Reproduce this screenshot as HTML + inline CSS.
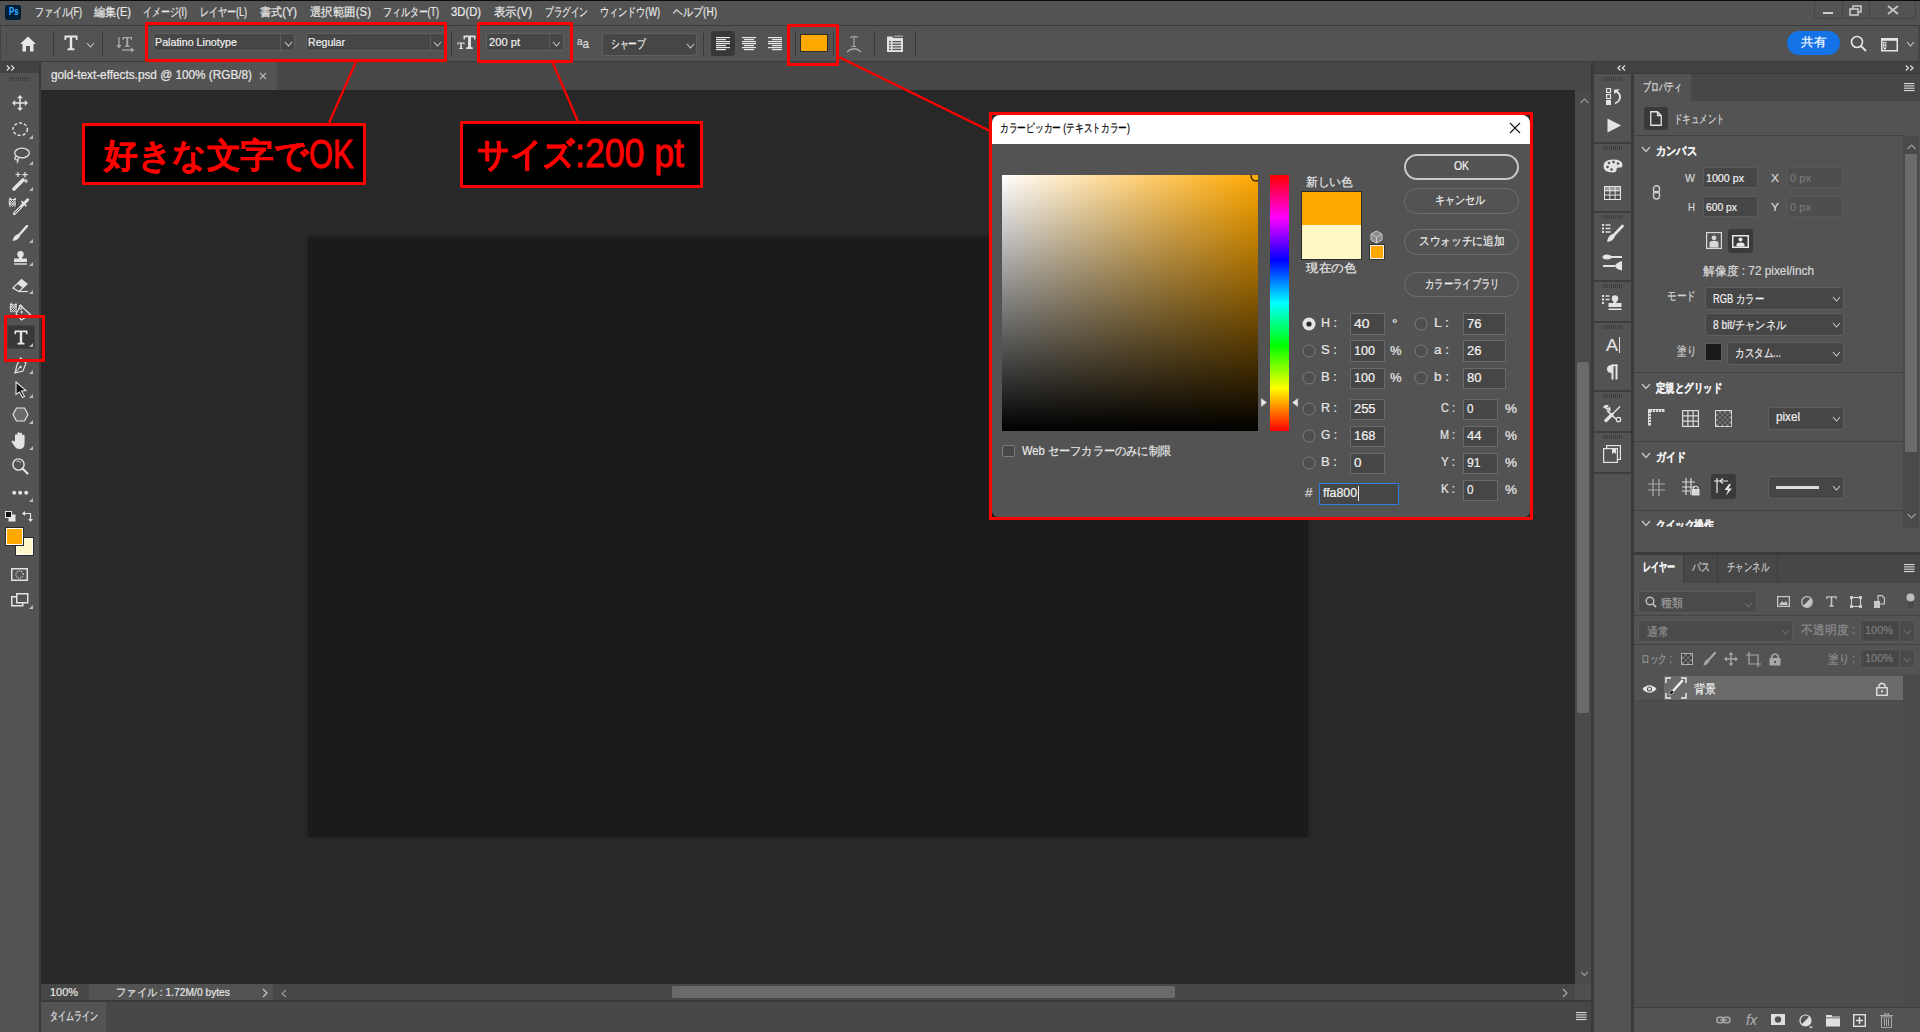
<!DOCTYPE html>
<html><head><meta charset="utf-8"><style>*{margin:0;padding:0;box-sizing:border-box}
html,body{width:1920px;height:1032px;overflow:hidden;background:#282828;font-family:"Liberation Sans",sans-serif;font-size:12px;color:#e6e6e6}
.a{position:absolute}
.t{white-space:pre;transform-origin:0 50%;-webkit-text-stroke:0.2px currentColor}
</style></head><body>
<div class="a" style="left:0px;top:0px;width:1920px;height:1px;background:#0b0b0b;"></div>
<div class="a" style="left:0px;top:1px;width:1920px;height:24px;background:#535353;"></div>
<div class="a" style="left:0px;top:25px;width:1920px;height:1px;background:#3a3a3a;"></div>
<div class="a" style="left:0px;top:26px;width:1920px;height:35px;background:#535353;"></div>
<div class="a" style="left:0px;top:61px;width:1920px;height:1px;background:#3a3a3a;"></div>
<div class="a" style="left:0px;top:62px;width:39px;height:970px;background:#535353;"></div>
<div class="a" style="left:0px;top:62px;width:39px;height:11px;background:#424242;"></div>
<div class="a" style="left:39px;top:62px;width:2px;height:970px;background:#3a3a3a;"></div>
<div class="a" style="left:41px;top:62px;width:1550px;height:28px;background:#474747;"></div>
<div class="a" style="left:41px;top:62px;width:236px;height:28px;background:#535353;"></div>
<div class="a" style="left:41px;top:90px;width:1534px;height:894px;background:#282828;"></div>
<div class="a" style="left:308px;top:237px;width:1000px;height:600px;background:#1b1b1b;box-shadow:0 0 3px rgba(0,0,0,.35)"></div>
<div class="a" style="left:1575px;top:90px;width:16px;height:894px;background:#4a4a4a;"></div>
<div class="a" style="left:1577px;top:362px;width:12px;height:351px;background:#6a6a6a;border-radius:2px"></div>
<div class="a" style="left:41px;top:984px;width:1534px;height:16px;background:#474747;"></div>
<div class="a" style="left:89px;top:984px;width:184px;height:16px;background:#535353;"></div>
<div class="a" style="left:1575px;top:984px;width:16px;height:16px;background:#4f4f4f;"></div>
<div class="a" style="left:672px;top:986px;width:503px;height:12px;background:#6a6a6a;border-radius:2px"></div>
<div class="a" style="left:41px;top:1000px;width:1550px;height:2px;background:#3a3a3a;"></div>
<div class="a" style="left:41px;top:1002px;width:1550px;height:30px;background:#474747;"></div>
<div class="a" style="left:41px;top:1002px;width:65px;height:30px;background:#535353;"></div>
<div class="a" style="left:1591px;top:62px;width:3px;height:970px;background:#3a3a3a;"></div>
<div class="a" style="left:1594px;top:62px;width:326px;height:11px;background:#424242;"></div>
<div class="a" style="left:1594px;top:73px;width:326px;height:1px;background:#3a3a3a;"></div>
<div class="a" style="left:1594px;top:74px;width:37px;height:958px;background:#535353;"></div>
<div class="a" style="left:1631px;top:74px;width:3px;height:958px;background:#3a3a3a;"></div>
<div class="a" style="left:1634px;top:74px;width:286px;height:478px;background:#535353;"></div>
<div class="a" style="left:1634px;top:74px;width:286px;height:27px;background:#474747;"></div>
<div class="a" style="left:1634px;top:74px;width:57px;height:27px;background:#535353;"></div>
<div class="a" style="left:1634px;top:552px;width:286px;height:3px;background:#3a3a3a;"></div>
<div class="a" style="left:1634px;top:555px;width:286px;height:477px;background:#4d4d4d;"></div>
<div class="a" style="left:1634px;top:555px;width:286px;height:28px;background:#474747;"></div>
<div class="a" style="left:1634px;top:555px;width:49px;height:28px;background:#535353;"></div>
<div class="a t" style="transform:scaleX(0.742);left:35px;top:5.8px;font-size:12px;line-height:12px;color:#e8e8e8;font-weight:normal;">ファイル(F)</div>
<div class="a t" style="transform:scaleX(0.925);left:94px;top:5.8px;font-size:12px;line-height:12px;color:#e8e8e8;font-weight:normal;">編集(E)</div>
<div class="a t" style="transform:scaleX(0.742);left:143px;top:5.8px;font-size:12px;line-height:12px;color:#e8e8e8;font-weight:normal;">イメージ(I)</div>
<div class="a t" style="transform:scaleX(0.750);left:200px;top:5.8px;font-size:12px;line-height:12px;color:#e8e8e8;font-weight:normal;">レイヤー(L)</div>
<div class="a t" style="transform:scaleX(0.925);left:260px;top:5.8px;font-size:12px;line-height:12px;color:#e8e8e8;font-weight:normal;">書式(Y)</div>
<div class="a t" style="transform:scaleX(0.953);left:310px;top:5.8px;font-size:12px;line-height:12px;color:#e8e8e8;font-weight:normal;">選択範囲(S)</div>
<div class="a t" style="transform:scaleX(0.743);left:383px;top:5.8px;font-size:12px;line-height:12px;color:#e8e8e8;font-weight:normal;">フィルター(T)</div>
<div class="a t" style="transform:scaleX(0.938);left:451px;top:5.8px;font-size:12px;line-height:12px;color:#e8e8e8;font-weight:normal;">3D(D)</div>
<div class="a t" style="transform:scaleX(0.950);left:494px;top:5.8px;font-size:12px;line-height:12px;color:#e8e8e8;font-weight:normal;">表示(V)</div>
<div class="a t" style="transform:scaleX(0.717);left:545px;top:5.8px;font-size:12px;line-height:12px;color:#e8e8e8;font-weight:normal;">プラグイン</div>
<div class="a t" style="transform:scaleX(0.756);left:600px;top:5.8px;font-size:12px;line-height:12px;color:#e8e8e8;font-weight:normal;">ウィンドウ(W)</div>
<div class="a t" style="transform:scaleX(0.835);left:673px;top:5.8px;font-size:12px;line-height:12px;color:#e8e8e8;font-weight:normal;">ヘルプ(H)</div>
<div class="a" style="left:0px;top:26px;width:1px;height:35px;background:#424242;"></div>
<svg class="a" style="left:5px;top:33px;" width="3" height="21" viewBox="0 0 3 21"><rect x="1" y="0" width="1" height="1" fill="#3c3c3c"/><rect x="1" y="2" width="1" height="1" fill="#3c3c3c"/><rect x="1" y="4" width="1" height="1" fill="#3c3c3c"/><rect x="1" y="6" width="1" height="1" fill="#3c3c3c"/><rect x="1" y="8" width="1" height="1" fill="#3c3c3c"/><rect x="1" y="10" width="1" height="1" fill="#3c3c3c"/><rect x="1" y="12" width="1" height="1" fill="#3c3c3c"/><rect x="1" y="14" width="1" height="1" fill="#3c3c3c"/><rect x="1" y="16" width="1" height="1" fill="#3c3c3c"/><rect x="1" y="18" width="1" height="1" fill="#3c3c3c"/></svg>
<svg class="a" style="left:20px;top:36px;" width="16" height="16" viewBox="0 0 16 16"><path d="M8 0.5 L16 8 L13.5 8 L13.5 15.5 L10 15.5 L10 10 L6 10 L6 15.5 L2.5 15.5 L2.5 8 L0 8 Z" fill="#e8e8e8"/></svg>
<div class="a" style="left:53px;top:31px;width:1px;height:25px;background:#3b3b3b;"></div>
<svg class="a" style="left:64px;top:35px;" width="14" height="16" viewBox="0 0 14 16"><path d="M0.5 0.5 H13.5 V5 H12 L11.5 2.5 H8.2 V13.2 L10.5 13.6 V15.2 H3.5 V13.6 L5.8 13.2 V2.5 H2.5 L2 5 H0.5 Z" fill="#e8e8e8"/></svg>
<svg class="a" style="left:86.0px;top:41.5px;" width="9" height="6" viewBox="0 0 9 6"><polyline points="1,1 4.5,5 8,1" fill="none" stroke="#c8c8c8" stroke-width="1.1"/></svg>
<div class="a" style="left:102px;top:31px;width:1px;height:25px;background:#3b3b3b;"></div>
<svg class="a" style="left:116px;top:36px;" width="20" height="18" viewBox="0 0 20 18"><path d="M3 1 V11" stroke="#a9a9a9" stroke-width="1.3"/><path d="M0.5 9 L3 12.5 L5.5 9 Z" fill="#a9a9a9"/><path d="M6.5 1 H16 V4 H15 L14.7 2.3 H12.2 V9.5 L13.5 9.8 V11 H9 V9.8 L10.3 9.5 V2.3 H7.8 L7.5 4 H6.5 Z" fill="#a9a9a9"/><path d="M6 14 H16" stroke="#a9a9a9" stroke-width="1.3"/><path d="M15 11.5 L18.5 14 L15 16.5 Z" fill="#a9a9a9"/></svg>
<div class="a" style="left:153px;top:33px;width:142px;height:18px;background:#464646;border:1px solid #5f5f5f;border-radius:3px"></div>
<div class="a" style="left:280px;top:34px;width:1px;height:16px;background:#5a5a5a;"></div>
<div class="a t" style="transform:scaleX(0.929);left:155px;top:37.3px;font-size:11.5px;line-height:11.5px;color:#f0f0f0;font-weight:normal;">Palatino Linotype</div>
<svg class="a" style="left:283.5px;top:41.0px;" width="9" height="6" viewBox="0 0 9 6"><polyline points="1,1 4.5,5 8,1" fill="none" stroke="#c8c8c8" stroke-width="1.1"/></svg>
<div class="a" style="left:306px;top:33px;width:141px;height:18px;background:#464646;border:1px solid #5f5f5f;border-radius:3px"></div>
<div class="a" style="left:429.5px;top:34px;width:1px;height:16px;background:#5a5a5a;"></div>
<div class="a t" style="transform:scaleX(0.919);left:308px;top:37.3px;font-size:11.5px;line-height:11.5px;color:#f0f0f0;font-weight:normal;">Regular</div>
<svg class="a" style="left:433.0px;top:41.0px;" width="9" height="6" viewBox="0 0 9 6"><polyline points="1,1 4.5,5 8,1" fill="none" stroke="#c8c8c8" stroke-width="1.1"/></svg>
<div class="a" style="left:451px;top:31px;width:1px;height:25px;background:#3b3b3b;"></div>
<svg class="a" style="left:457px;top:35px;" width="19" height="15" viewBox="0 0 19 15"><path d="M6.5 0.5 H18.5 V4.5 H17.3 L16.8 2.2 H14 V12 L15.8 12.4 V14 H9.2 V12.4 L11 12 V2.2 H8.2 L7.7 4.5 H6.5 Z" fill="#e0e0e0"/><path d="M0.5 7.5 H7.5 V9.8 H6.8 L6.5 8.6 H4.8 V12.8 L5.8 13 V14 H2.2 V13 L3.2 12.8 V8.6 H1.5 L1.2 9.8 H0.5 Z" fill="#e0e0e0"/></svg>
<div class="a" style="left:486px;top:33px;width:78px;height:18px;background:#464646;border:1px solid #5f5f5f;border-radius:3px"></div>
<div class="a" style="left:549px;top:34px;width:1px;height:16px;background:#5a5a5a;"></div>
<div class="a t" style="transform:scaleX(0.969);left:489px;top:37.3px;font-size:11.5px;line-height:11.5px;color:#f0f0f0;font-weight:normal;">200 pt</div>
<svg class="a" style="left:552.0px;top:41.0px;" width="9" height="6" viewBox="0 0 9 6"><polyline points="1,1 4.5,5 8,1" fill="none" stroke="#c8c8c8" stroke-width="1.1"/></svg>
<div class="a t" style="transform:scaleX(0.898);left:577px;top:35.3px;font-size:13px;line-height:13px;color:#dcdcdc;font-weight:normal;font-family:"Liberation Serif",serif"><span style="font-size:11px;vertical-align:3px">a</span><span>a</span></div>
<div class="a" style="left:602px;top:33px;width:95px;height:23px;background:#464646;border:1px solid #5f5f5f;border-radius:3px"></div>
<div class="a t" style="transform:scaleX(0.729);left:611px;top:38.0px;font-size:12px;line-height:12px;color:#f0f0f0;font-weight:normal;">シャープ</div>
<svg class="a" style="left:686.0px;top:42.5px;" width="9" height="6" viewBox="0 0 9 6"><polyline points="1,1 4.5,5 8,1" fill="none" stroke="#c8c8c8" stroke-width="1.1"/></svg>
<div class="a" style="left:703px;top:31px;width:1px;height:25px;background:#3b3b3b;"></div>
<div class="a" style="left:711px;top:31px;width:24px;height:25px;background:#383838;border-radius:3px"></div>
<svg class="a" style="left:716px;top:37px;" width="14" height="14" viewBox="0 0 14 14"><rect x="0" y="0" width="14" height="1.2" fill="#e8e8e8"/><rect x="0" y="2" width="10" height="1.2" fill="#e8e8e8"/><rect x="0" y="4" width="14" height="1.2" fill="#e8e8e8"/><rect x="0" y="6" width="14" height="1.2" fill="#e8e8e8"/><rect x="0" y="8" width="10" height="1.2" fill="#e8e8e8"/><rect x="0" y="10" width="14" height="1.2" fill="#e8e8e8"/><rect x="0" y="12" width="10" height="1.2" fill="#e8e8e8"/></svg>
<svg class="a" style="left:742px;top:37px;" width="14" height="14" viewBox="0 0 14 14"><rect x="0.0" y="0" width="14" height="1.2" fill="#e8e8e8"/><rect x="2.0" y="2" width="10" height="1.2" fill="#e8e8e8"/><rect x="0.0" y="4" width="14" height="1.2" fill="#e8e8e8"/><rect x="0.0" y="6" width="14" height="1.2" fill="#e8e8e8"/><rect x="2.0" y="8" width="10" height="1.2" fill="#e8e8e8"/><rect x="0.0" y="10" width="14" height="1.2" fill="#e8e8e8"/><rect x="2.0" y="12" width="10" height="1.2" fill="#e8e8e8"/></svg>
<svg class="a" style="left:768px;top:37px;" width="14" height="14" viewBox="0 0 14 14"><rect x="0" y="0" width="14" height="1.2" fill="#e8e8e8"/><rect x="4" y="2" width="10" height="1.2" fill="#e8e8e8"/><rect x="0" y="4" width="14" height="1.2" fill="#e8e8e8"/><rect x="0" y="6" width="14" height="1.2" fill="#e8e8e8"/><rect x="4" y="8" width="10" height="1.2" fill="#e8e8e8"/><rect x="0" y="10" width="14" height="1.2" fill="#e8e8e8"/><rect x="4" y="12" width="10" height="1.2" fill="#e8e8e8"/></svg>
<div class="a" style="left:795px;top:31px;width:1px;height:25px;background:#3b3b3b;"></div>
<div class="a" style="left:800px;top:34px;width:28px;height:18px;background:#ffa800;border:1px solid #2c2c2c"></div>
<div class="a" style="left:833px;top:31px;width:1px;height:25px;background:#3b3b3b;"></div>
<svg class="a" style="left:846px;top:36px;" width="16" height="17" viewBox="0 0 16 17"><path d="M4 1.5 Q8 0 12 1 M8 1 V10.5 M5.5 10.5 H10" stroke="#a9a9a9" stroke-width="1.2" fill="none"/><path d="M1 16 Q8 9.5 15 16" stroke="#a9a9a9" stroke-width="1.2" fill="none"/></svg>
<div class="a" style="left:874px;top:31px;width:1px;height:25px;background:#3b3b3b;"></div>
<svg class="a" style="left:886px;top:35px;" width="18" height="18" viewBox="0 0 18 18"><path d="M1 1.5 H6 L7.5 3 H17 V17 H1 Z" fill="#e2e2e2"/><rect x="8" y="0.5" width="9" height="1.5" fill="#9a9a9a"/><rect x="3" y="6.0" width="2" height="1.3" fill="#535353"/><rect x="6.5" y="6.0" width="8.5" height="1.3" fill="#535353"/><rect x="3" y="8.6" width="2" height="1.3" fill="#535353"/><rect x="6.5" y="8.6" width="8.5" height="1.3" fill="#535353"/><rect x="3" y="11.2" width="2" height="1.3" fill="#535353"/><rect x="6.5" y="11.2" width="8.5" height="1.3" fill="#535353"/><rect x="3" y="13.8" width="2" height="1.3" fill="#535353"/><rect x="6.5" y="13.8" width="8.5" height="1.3" fill="#535353"/></svg>
<div class="a" style="left:915px;top:31px;width:1px;height:25px;background:#3b3b3b;"></div>
<div class="a" style="left:1787px;top:31px;width:53px;height:24px;background:#1473e6;border-radius:12px"></div>
<div class="a t" style="transform:scaleX(1.042);left:1801px;top:36.3px;font-size:12px;line-height:12px;color:#ffffff;font-weight:normal;">共有</div>
<svg class="a" style="left:1850px;top:35px;" width="18" height="18" viewBox="0 0 18 18"><circle cx="7" cy="7" r="5.5" stroke="#e6e6e6" stroke-width="1.6" fill="none"/><path d="M11 11 L16 16" stroke="#e6e6e6" stroke-width="1.8"/></svg>
<svg class="a" style="left:1881px;top:38px;" width="17" height="14" viewBox="0 0 17 14"><rect x="0.75" y="0.75" width="15.5" height="12" stroke="#e6e6e6" stroke-width="1.5" fill="none"/><rect x="0.75" y="0.75" width="15.5" height="2" fill="#e6e6e6"/><rect x="2.5" y="4.2" width="2.5" height="2" stroke="#e6e6e6" stroke-width="0.8" fill="none"/><rect x="2.5" y="7.2" width="2.5" height="2" stroke="#e6e6e6" stroke-width="0.8" fill="none"/><rect x="2.5" y="10" width="2.5" height="1.3" fill="#e6e6e6"/></svg>
<svg class="a" style="left:1906.0px;top:40.5px;" width="9" height="6" viewBox="0 0 9 6"><polyline points="1,1 4.5,5 8,1" fill="none" stroke="#c8c8c8" stroke-width="1.1"/></svg>
<div class="a" style="left:1918px;top:26px;width:2px;height:35px;background:#454545;"></div>
<div class="a" style="left:1814px;top:1px;width:102px;height:18px;border:1px solid #454545;border-top:none;border-radius:0 0 4px 4px"></div>
<div class="a" style="left:1842px;top:1px;width:1px;height:17px;background:#454545;"></div>
<div class="a" style="left:1869px;top:1px;width:1px;height:17px;background:#454545;"></div>
<div class="a" style="left:1823px;top:12px;width:10px;height:2px;background:#cfcfcf;"></div>
<svg class="a" style="left:1849px;top:5px;" width="14" height="12" viewBox="0 0 14 12"><rect x="4" y="1" width="8" height="6" stroke="#cfcfcf" stroke-width="1.5" fill="none"/><rect x="1" y="4" width="8" height="6" fill="#535353" stroke="#cfcfcf" stroke-width="1.5"/></svg>
<svg class="a" style="left:1887px;top:5px;" width="12" height="10" viewBox="0 0 12 10"><path d="M1 1 L11 9 M11 1 L1 9" stroke="#c4c4c4" stroke-width="1.9"/></svg>
<div class="a" style="left:5px;top:5px;width:16px;height:15px;background:#001e36;border-radius:2.5px"></div>
<div class="a t" style="transform:scaleX(0.777);left:8.7px;top:6.9px;font-size:10px;line-height:10px;color:#31a8ff;font-weight:bold;">Ps</div>
<svg class="a" style="left:6px;top:65px;" width="9" height="6" viewBox="0 0 9 6"><path d="M0.8 0.5 L3.5 3 L0.8 5.5 M5.3 0.5 L8 3 L5.3 5.5" stroke="#e0e0e0" stroke-width="1.2" fill="none"/></svg>
<svg class="a" style="left:10px;top:77px;" width="20" height="4" viewBox="0 0 20 4"><rect x="0" y="0" width="1" height="4" fill="#3e3e3e"/><rect x="2" y="0" width="1" height="4" fill="#3e3e3e"/><rect x="4" y="0" width="1" height="4" fill="#3e3e3e"/><rect x="6" y="0" width="1" height="4" fill="#3e3e3e"/><rect x="8" y="0" width="1" height="4" fill="#3e3e3e"/><rect x="10" y="0" width="1" height="4" fill="#3e3e3e"/><rect x="12" y="0" width="1" height="4" fill="#3e3e3e"/><rect x="14" y="0" width="1" height="4" fill="#3e3e3e"/><rect x="16" y="0" width="1" height="4" fill="#3e3e3e"/><rect x="18" y="0" width="1" height="4" fill="#3e3e3e"/></svg>
<svg class="a" style="left:12px;top:95px;" width="16" height="16" viewBox="0 0 16 16"><path d="M8 1 V15 M1 8 H15" stroke="#e3e3e3" stroke-width="1.5"/><path d="M8 0 L11 3.2 H5 Z M8 16 L11 12.8 H5 Z M0 8 L3.2 5 V11 Z M16 8 L12.8 5 V11 Z" fill="#e3e3e3"/></svg>
<svg class="a" style="left:12px;top:122px;" width="17" height="15" viewBox="0 0 17 15"><ellipse cx="8.2" cy="7.2" rx="7.2" ry="6.2" stroke="#e3e3e3" stroke-width="1.4" fill="none" stroke-dasharray="3 2"/></svg>
<svg class="a" style="left:29px;top:135px;" width="4" height="4" viewBox="0 0 4 4"><path d="M4 0 V4 H0 Z" fill="#bdbdbd"/></svg>
<svg class="a" style="left:12px;top:147px;" width="18" height="18" viewBox="0 0 18 18"><ellipse cx="10" cy="6" rx="7.3" ry="4.8" stroke="#e3e3e3" stroke-width="1.3" fill="none"/><path d="M4 9.5 Q2 11 3.5 12.5 Q5 13.5 6 12 Q6.5 14.5 5 16" stroke="#e3e3e3" stroke-width="1.3" fill="none"/></svg>
<svg class="a" style="left:29px;top:161px;" width="4" height="4" viewBox="0 0 4 4"><path d="M4 0 V4 H0 Z" fill="#bdbdbd"/></svg>
<svg class="a" style="left:11px;top:172px;" width="20" height="19" viewBox="0 0 20 19"><path d="M3 17 L12 8" stroke="#e3e3e3" stroke-width="3.6" stroke-linecap="round"/><path d="M7 0 V5 M4.5 2.5 H9.5 M14 0 V5.5 M11.2 2.7 H16.8 M15 7 V11 M13 9 H17" stroke="#e3e3e3" stroke-width="1.2"/></svg>
<svg class="a" style="left:29px;top:187px;" width="4" height="4" viewBox="0 0 4 4"><path d="M4 0 V4 H0 Z" fill="#bdbdbd"/></svg>
<svg class="a" style="left:8px;top:197px;" width="22" height="19" viewBox="0 0 22 19"><path d="M1 1.8 L2.3 0.2 L3.4 2 H5.8 L7 0.6 L8 2 V9.5 Q4 10.2 1.2 9.5 Q0.4 6 1 1.8 Z" fill="#e8e8e8"/><circle cx="2.2" cy="3.4" r="0.55" fill="#111"/><circle cx="2.2" cy="5.8" r="0.55" fill="#111"/><circle cx="2.2" cy="8.2" r="0.55" fill="#111"/><circle cx="3.4" cy="4.6" r="0.55" fill="#111"/><circle cx="3.4" cy="7.0" r="0.55" fill="#111"/><circle cx="3.4" cy="9.4" r="0.55" fill="#111"/><circle cx="4.6" cy="3.4" r="0.55" fill="#111"/><circle cx="4.6" cy="5.8" r="0.55" fill="#111"/><circle cx="4.6" cy="8.2" r="0.55" fill="#111"/><circle cx="5.8" cy="4.6" r="0.55" fill="#111"/><circle cx="5.8" cy="7.0" r="0.55" fill="#111"/><circle cx="5.8" cy="9.4" r="0.55" fill="#111"/><circle cx="7.0" cy="3.4" r="0.55" fill="#111"/><circle cx="7.0" cy="5.8" r="0.55" fill="#111"/><circle cx="7.0" cy="8.2" r="0.55" fill="#111"/><circle cx="8.2" cy="4.6" r="0.55" fill="#111"/><circle cx="8.2" cy="7.0" r="0.55" fill="#111"/><circle cx="8.2" cy="9.4" r="0.55" fill="#111"/><path d="M6.2 16.8 L13 10" stroke="#e3e3e3" stroke-width="2.8" stroke-linecap="round"/><path d="M6.6 16.4 L12.6 10.4" stroke="#535353" stroke-width="1"/><path d="M12 8.5 L14.3 6.2 L12.8 4.7 L14 3.5 L15.5 5 L18.5 2 Q19.8 0.8 20.8 1.8 Q21.8 2.8 20.5 4 L17.5 7 L19 8.5 L17.8 9.7 L16.3 8.2 L14 10.5 Z" fill="#e3e3e3"/></svg>
<svg class="a" style="left:12px;top:225px;" width="16" height="17" viewBox="0 0 16 17"><path d="M15.5 0.5 L7 10" stroke="#e3e3e3" stroke-width="2.4" stroke-linecap="round"/><path d="M6 9 Q1.5 10.5 0.5 16 Q5.5 15.5 8 11.5 Z" fill="#e3e3e3"/></svg>
<svg class="a" style="left:29px;top:239px;" width="4" height="4" viewBox="0 0 4 4"><path d="M4 0 V4 H0 Z" fill="#bdbdbd"/></svg>
<svg class="a" style="left:13px;top:251px;" width="15" height="14" viewBox="0 0 15 14"><circle cx="7.5" cy="3.3" r="3.2" fill="#e3e3e3"/><rect x="6" y="5" width="3" height="3" fill="#e3e3e3"/><rect x="1" y="7.5" width="13" height="3.5" rx="0.5" fill="#e3e3e3"/><rect x="1" y="12.3" width="13" height="1.4" fill="#e3e3e3"/></svg>
<svg class="a" style="left:29px;top:262px;" width="4" height="4" viewBox="0 0 4 4"><path d="M4 0 V4 H0 Z" fill="#bdbdbd"/></svg>
<svg class="a" style="left:12px;top:278px;" width="17" height="15" viewBox="0 0 17 15"><path d="M1 10 L9.5 1.5 L15 6 L7 13.5 Z" fill="none" stroke="#e3e3e3" stroke-width="1.2"/><path d="M5.5 6 L9.5 1.5 L15 6 L11 10 Z" fill="#e3e3e3"/><path d="M7 13.5 H16" stroke="#e3e3e3" stroke-width="1.2"/></svg>
<svg class="a" style="left:29px;top:290px;" width="4" height="4" viewBox="0 0 4 4"><path d="M4 0 V4 H0 Z" fill="#bdbdbd"/></svg>
<svg class="a" style="left:8px;top:300px;" width="24" height="22" viewBox="0 0 24 22"><g transform="translate(1,2.4)"><path d="M1 1.8 L2.3 0.2 L3.4 2 H5.8 L7 0.6 L8 2 V9.5 Q4 10.2 1.2 9.5 Q0.4 6 1 1.8 Z" fill="#e8e8e8"/><circle cx="2.2" cy="3.4" r="0.55" fill="#111"/><circle cx="2.2" cy="5.8" r="0.55" fill="#111"/><circle cx="2.2" cy="8.2" r="0.55" fill="#111"/><circle cx="3.4" cy="4.6" r="0.55" fill="#111"/><circle cx="3.4" cy="7.0" r="0.55" fill="#111"/><circle cx="3.4" cy="9.4" r="0.55" fill="#111"/><circle cx="4.6" cy="3.4" r="0.55" fill="#111"/><circle cx="4.6" cy="5.8" r="0.55" fill="#111"/><circle cx="4.6" cy="8.2" r="0.55" fill="#111"/><circle cx="5.8" cy="4.6" r="0.55" fill="#111"/><circle cx="5.8" cy="7.0" r="0.55" fill="#111"/><circle cx="5.8" cy="9.4" r="0.55" fill="#111"/><circle cx="7.0" cy="3.4" r="0.55" fill="#111"/><circle cx="7.0" cy="5.8" r="0.55" fill="#111"/><circle cx="7.0" cy="8.2" r="0.55" fill="#111"/><circle cx="8.2" cy="4.6" r="0.55" fill="#111"/><circle cx="8.2" cy="7.0" r="0.55" fill="#111"/><circle cx="8.2" cy="9.4" r="0.55" fill="#111"/></g><path d="M8 14 L12.5 5.5 L22.3 14.5 L13.5 20 Z" stroke="#e3e3e3" stroke-width="1.2" fill="none"/><ellipse cx="12.6" cy="7.2" rx="1.4" ry="2.2" stroke="#e3e3e3" stroke-width="1.1" fill="none"/><ellipse cx="13.6" cy="12" rx="1" ry="1.5" fill="#e3e3e3"/></svg>
<div class="a" style="left:7px;top:325px;width:28px;height:24px;background:#383838;border-radius:3px;box-shadow:inset 0 0 0 1px #444"></div>
<svg class="a" style="left:14px;top:330px;" width="14" height="15" viewBox="0 0 14 15"><path d="M0.5 0.5 H13.5 V4.2 H12.2 L11.8 2.3 H8.2 V12.5 L10.5 12.9 V14.5 H3.5 V12.9 L5.8 12.5 V2.3 H2.2 L1.8 4.2 H0.5 Z" fill="#e8e8e8"/></svg>
<svg class="a" style="left:28.5px;top:342.5px;" width="4" height="4" viewBox="0 0 4 4"><path d="M4 0 V4 H0 Z" fill="#bdbdbd"/></svg>
<svg class="a" style="left:12px;top:357px;" width="17" height="18" viewBox="0 0 17 18"><path d="M8.5 1 L14 6 L11 14 L3 16 L5 8 Z" fill="none" stroke="#e3e3e3" stroke-width="1.2"/><path d="M3 16 L8 10" stroke="#e3e3e3" stroke-width="1"/><circle cx="8.5" cy="10" r="1.2" fill="#e3e3e3"/></svg>
<svg class="a" style="left:29px;top:370px;" width="4" height="4" viewBox="0 0 4 4"><path d="M4 0 V4 H0 Z" fill="#bdbdbd"/></svg>
<svg class="a" style="left:15px;top:381px;" width="12" height="17" viewBox="0 0 12 17"><path d="M1 1 L11 9.5 L6.5 10 L9.5 15.5 L7.5 16.5 L4.5 11 L1 13.5 Z" fill="#111" stroke="#e3e3e3" stroke-width="1.1"/></svg>
<svg class="a" style="left:29px;top:394px;" width="4" height="4" viewBox="0 0 4 4"><path d="M4 0 V4 H0 Z" fill="#bdbdbd"/></svg>
<svg class="a" style="left:12px;top:407px;" width="17" height="15" viewBox="0 0 17 15"><path d="M4.5 1 H12.5 L16 7.5 L12.5 14 H4.5 L1 7.5 Z" fill="#6a6a6a" stroke="#e3e3e3" stroke-width="1.2"/></svg>
<svg class="a" style="left:29px;top:420px;" width="4" height="4" viewBox="0 0 4 4"><path d="M4 0 V4 H0 Z" fill="#bdbdbd"/></svg>
<svg class="a" style="left:11px;top:432px;" width="18" height="18" viewBox="0 0 18 18"><path d="M4 8 V3.5 Q4 2.3 5.2 2.3 Q6.4 2.3 6.4 3.5 V7 V1.5 Q6.4 0.3 7.6 0.3 Q8.8 0.3 8.8 1.5 V7 V2 Q8.8 0.8 10 0.8 Q11.2 0.8 11.2 2 V7.5 V4 Q11.2 2.8 12.4 2.8 Q13.6 2.8 13.6 4 V11 Q13.6 17 8.5 17 Q5 17 3 13.5 L0.8 10 Q0.3 8.8 1.5 8.5 Q2.5 8.3 3.5 10 Z" fill="#e3e3e3"/></svg>
<svg class="a" style="left:29px;top:446px;" width="4" height="4" viewBox="0 0 4 4"><path d="M4 0 V4 H0 Z" fill="#bdbdbd"/></svg>
<svg class="a" style="left:12px;top:458px;" width="17" height="18" viewBox="0 0 17 18"><circle cx="6.5" cy="6.5" r="5.6" stroke="#e3e3e3" stroke-width="1.4" fill="none"/><path d="M10.5 10.5 L15.5 15.5" stroke="#e3e3e3" stroke-width="2.2" stroke-linecap="round"/><path d="M4.5 3.2 Q7.5 2.5 9 5" stroke="#e3e3e3" stroke-width="0.8" fill="none"/></svg>
<svg class="a" style="left:12px;top:490px;" width="17" height="6" viewBox="0 0 17 6"><circle cx="2.2" cy="2.8" r="2" fill="#e3e3e3"/><circle cx="8.2" cy="2.8" r="2" fill="#e3e3e3"/><circle cx="14.2" cy="2.8" r="2" fill="#e3e3e3"/></svg>
<svg class="a" style="left:29px;top:498px;" width="4" height="4" viewBox="0 0 4 4"><path d="M4 0 V4 H0 Z" fill="#bdbdbd"/></svg>
<svg class="a" style="left:5px;top:511px;" width="11" height="11" viewBox="0 0 11 11"><rect x="3.5" y="3.5" width="7" height="7" fill="#e3e3e3"/><rect x="0.5" y="0.5" width="6" height="6" fill="#111" stroke="#e3e3e3" stroke-width="1"/></svg>
<svg class="a" style="left:22px;top:511px;" width="11" height="11" viewBox="0 0 11 11"><path d="M2.5 2.5 H8.5 V9" stroke="#e3e3e3" stroke-width="1.2" fill="none"/><path d="M0 2.5 L3 0 V5 Z M8.5 11 L6 8 H11 Z" fill="#e3e3e3"/></svg>
<div class="a" style="left:14.5px;top:537px;width:19px;height:19px;background:#fff7c8;border:1px solid #2a2a2a;box-shadow:inset 0 0 0 1px #fff"></div>
<div class="a" style="left:4.5px;top:527px;width:19px;height:19px;background:#ffa800;border:1px solid #2a2a2a;box-shadow:inset 0 0 0 1px #fff"></div>
<svg class="a" style="left:11px;top:568px;" width="17" height="13" viewBox="0 0 17 13"><rect x="0.75" y="0.75" width="15.5" height="11.5" stroke="#e3e3e3" stroke-width="1.5" fill="none"/><circle cx="8.5" cy="6.5" r="3.6" stroke="#e3e3e3" stroke-width="1.2" fill="none" stroke-dasharray="0.1 2" stroke-linecap="round"/></svg>
<svg class="a" style="left:11px;top:593px;" width="22" height="17" viewBox="0 0 22 17"><rect x="0.75" y="3.75" width="11" height="9" stroke="#e3e3e3" stroke-width="1.5" fill="#535353"/><rect x="5.75" y="0.75" width="11" height="9" stroke="#e3e3e3" stroke-width="1.5" fill="#535353"/></svg>
<svg class="a" style="left:29px;top:605px;" width="4" height="4" viewBox="0 0 4 4"><path d="M4 0 V4 H0 Z" fill="#bdbdbd"/></svg>
<div class="a t" style="transform:scaleX(0.982);left:51px;top:69.3px;font-size:12px;line-height:12px;color:#e8e8e8;font-weight:normal;">gold-text-effects.psd @ 100% (RGB/8)</div>
<svg class="a" style="left:259px;top:72px;" width="8" height="8" viewBox="0 0 8 8"><path d="M1 1 L7 7 M7 1 L1 7" stroke="#b8b8b8" stroke-width="1.1"/></svg>
<svg class="a" style="left:1580px;top:98px;" width="9" height="6" viewBox="0 0 9 6"><polyline points="0.5,5 4.5,1 8.5,5" stroke="#9a9a9a" stroke-width="1.1" fill="none"/></svg>
<svg class="a" style="left:1580px;top:971px;" width="9" height="6" viewBox="0 0 9 6"><polyline points="1,1 4.5,4.5 8,1" stroke="#9a9a9a" stroke-width="1.1" fill="none"/></svg>
<div class="a t" style="transform:scaleX(0.995);left:50px;top:986.8px;font-size:11px;line-height:11px;color:#e6e6e6;font-weight:normal;">100%</div>
<div class="a t" style="transform:scaleX(0.932);left:116px;top:986.8px;font-size:11px;line-height:11px;color:#e6e6e6;font-weight:normal;">ファイル : 1.72M/0 bytes</div>
<svg class="a" style="left:262px;top:988px;" width="6" height="10" viewBox="0 0 6 10"><polyline points="1,1 5,5 1,9" stroke="#d0d0d0" stroke-width="1.1" fill="none"/></svg>
<svg class="a" style="left:281px;top:989px;" width="6" height="9" viewBox="0 0 6 9"><polyline points="5,1 1,4.5 5,8" stroke="#9a9a9a" stroke-width="1.1" fill="none"/></svg>
<svg class="a" style="left:1562px;top:988px;" width="6" height="10" viewBox="0 0 6 10"><polyline points="1,1 5,5 1,9" stroke="#b0b0b0" stroke-width="1.1" fill="none"/></svg>
<div class="a t" style="transform:scaleX(0.667);left:50px;top:1010.3px;font-size:12px;line-height:12px;color:#e6e6e6;font-weight:normal;">タイムライン</div>
<svg class="a" style="left:1576px;top:1012px;" width="11" height="9" viewBox="0 0 11 9"><rect x="0" y="0.00" width="10.5" height="1.1" fill="#d8d8d8"/><rect x="0" y="2.33" width="10.5" height="1.1" fill="#d8d8d8"/><rect x="0" y="4.66" width="10.5" height="1.1" fill="#d8d8d8"/><rect x="0" y="6.99" width="10.5" height="1.1" fill="#d8d8d8"/></svg>
<svg class="a" style="left:1617px;top:65px;" width="9" height="6" viewBox="0 0 9 6"><path d="M3.5 0.5 L0.8 3 L3.5 5.5 M8 0.5 L5.3 3 L8 5.5" stroke="#e0e0e0" stroke-width="1.2" fill="none"/></svg>
<svg class="a" style="left:1905px;top:65px;" width="9" height="6" viewBox="0 0 9 6"><path d="M0.8 0.5 L3.5 3 L0.8 5.5 M5.3 0.5 L8 3 L5.3 5.5" stroke="#e0e0e0" stroke-width="1.2" fill="none"/></svg>
<div class="a" style="left:1594px;top:142px;width:37px;height:2px;background:#3e3e3e;"></div>
<div class="a" style="left:1594px;top:211px;width:37px;height:2px;background:#3e3e3e;"></div>
<div class="a" style="left:1594px;top:280px;width:37px;height:2px;background:#3e3e3e;"></div>
<div class="a" style="left:1594px;top:321px;width:37px;height:2px;background:#3e3e3e;"></div>
<div class="a" style="left:1594px;top:390px;width:37px;height:2px;background:#3e3e3e;"></div>
<div class="a" style="left:1594px;top:431px;width:37px;height:2px;background:#3e3e3e;"></div>
<div class="a" style="left:1594px;top:472px;width:37px;height:2px;background:#3e3e3e;"></div>
<svg class="a" style="left:1603px;top:77px;" width="20" height="4" viewBox="0 0 20 4"><rect x="0" y="0" width="1" height="4" fill="#3e3e3e"/><rect x="2" y="0" width="1" height="4" fill="#3e3e3e"/><rect x="4" y="0" width="1" height="4" fill="#3e3e3e"/><rect x="6" y="0" width="1" height="4" fill="#3e3e3e"/><rect x="8" y="0" width="1" height="4" fill="#3e3e3e"/><rect x="10" y="0" width="1" height="4" fill="#3e3e3e"/><rect x="12" y="0" width="1" height="4" fill="#3e3e3e"/><rect x="14" y="0" width="1" height="4" fill="#3e3e3e"/><rect x="16" y="0" width="1" height="4" fill="#3e3e3e"/><rect x="18" y="0" width="1" height="4" fill="#3e3e3e"/></svg>
<svg class="a" style="left:1603px;top:146px;" width="20" height="4" viewBox="0 0 20 4"><rect x="0" y="0" width="1" height="4" fill="#3e3e3e"/><rect x="2" y="0" width="1" height="4" fill="#3e3e3e"/><rect x="4" y="0" width="1" height="4" fill="#3e3e3e"/><rect x="6" y="0" width="1" height="4" fill="#3e3e3e"/><rect x="8" y="0" width="1" height="4" fill="#3e3e3e"/><rect x="10" y="0" width="1" height="4" fill="#3e3e3e"/><rect x="12" y="0" width="1" height="4" fill="#3e3e3e"/><rect x="14" y="0" width="1" height="4" fill="#3e3e3e"/><rect x="16" y="0" width="1" height="4" fill="#3e3e3e"/><rect x="18" y="0" width="1" height="4" fill="#3e3e3e"/></svg>
<svg class="a" style="left:1603px;top:215px;" width="20" height="4" viewBox="0 0 20 4"><rect x="0" y="0" width="1" height="4" fill="#3e3e3e"/><rect x="2" y="0" width="1" height="4" fill="#3e3e3e"/><rect x="4" y="0" width="1" height="4" fill="#3e3e3e"/><rect x="6" y="0" width="1" height="4" fill="#3e3e3e"/><rect x="8" y="0" width="1" height="4" fill="#3e3e3e"/><rect x="10" y="0" width="1" height="4" fill="#3e3e3e"/><rect x="12" y="0" width="1" height="4" fill="#3e3e3e"/><rect x="14" y="0" width="1" height="4" fill="#3e3e3e"/><rect x="16" y="0" width="1" height="4" fill="#3e3e3e"/><rect x="18" y="0" width="1" height="4" fill="#3e3e3e"/></svg>
<svg class="a" style="left:1603px;top:284px;" width="20" height="4" viewBox="0 0 20 4"><rect x="0" y="0" width="1" height="4" fill="#3e3e3e"/><rect x="2" y="0" width="1" height="4" fill="#3e3e3e"/><rect x="4" y="0" width="1" height="4" fill="#3e3e3e"/><rect x="6" y="0" width="1" height="4" fill="#3e3e3e"/><rect x="8" y="0" width="1" height="4" fill="#3e3e3e"/><rect x="10" y="0" width="1" height="4" fill="#3e3e3e"/><rect x="12" y="0" width="1" height="4" fill="#3e3e3e"/><rect x="14" y="0" width="1" height="4" fill="#3e3e3e"/><rect x="16" y="0" width="1" height="4" fill="#3e3e3e"/><rect x="18" y="0" width="1" height="4" fill="#3e3e3e"/></svg>
<svg class="a" style="left:1603px;top:325px;" width="20" height="4" viewBox="0 0 20 4"><rect x="0" y="0" width="1" height="4" fill="#3e3e3e"/><rect x="2" y="0" width="1" height="4" fill="#3e3e3e"/><rect x="4" y="0" width="1" height="4" fill="#3e3e3e"/><rect x="6" y="0" width="1" height="4" fill="#3e3e3e"/><rect x="8" y="0" width="1" height="4" fill="#3e3e3e"/><rect x="10" y="0" width="1" height="4" fill="#3e3e3e"/><rect x="12" y="0" width="1" height="4" fill="#3e3e3e"/><rect x="14" y="0" width="1" height="4" fill="#3e3e3e"/><rect x="16" y="0" width="1" height="4" fill="#3e3e3e"/><rect x="18" y="0" width="1" height="4" fill="#3e3e3e"/></svg>
<svg class="a" style="left:1603px;top:394px;" width="20" height="4" viewBox="0 0 20 4"><rect x="0" y="0" width="1" height="4" fill="#3e3e3e"/><rect x="2" y="0" width="1" height="4" fill="#3e3e3e"/><rect x="4" y="0" width="1" height="4" fill="#3e3e3e"/><rect x="6" y="0" width="1" height="4" fill="#3e3e3e"/><rect x="8" y="0" width="1" height="4" fill="#3e3e3e"/><rect x="10" y="0" width="1" height="4" fill="#3e3e3e"/><rect x="12" y="0" width="1" height="4" fill="#3e3e3e"/><rect x="14" y="0" width="1" height="4" fill="#3e3e3e"/><rect x="16" y="0" width="1" height="4" fill="#3e3e3e"/><rect x="18" y="0" width="1" height="4" fill="#3e3e3e"/></svg>
<svg class="a" style="left:1603px;top:435px;" width="20" height="4" viewBox="0 0 20 4"><rect x="0" y="0" width="1" height="4" fill="#3e3e3e"/><rect x="2" y="0" width="1" height="4" fill="#3e3e3e"/><rect x="4" y="0" width="1" height="4" fill="#3e3e3e"/><rect x="6" y="0" width="1" height="4" fill="#3e3e3e"/><rect x="8" y="0" width="1" height="4" fill="#3e3e3e"/><rect x="10" y="0" width="1" height="4" fill="#3e3e3e"/><rect x="12" y="0" width="1" height="4" fill="#3e3e3e"/><rect x="14" y="0" width="1" height="4" fill="#3e3e3e"/><rect x="16" y="0" width="1" height="4" fill="#3e3e3e"/><rect x="18" y="0" width="1" height="4" fill="#3e3e3e"/></svg>
<svg class="a" style="left:1606px;top:88px;" width="15" height="18" viewBox="0 0 15 18"><rect x="0.6" y="0.6" width="3.9" height="3.9" stroke="#e3e3e3" stroke-width="1.2" fill="none"/><rect x="0.6" y="6.6" width="3.9" height="3.9" stroke="#e3e3e3" stroke-width="1.2" fill="none"/><rect x="0" y="12" width="5" height="5" fill="#e3e3e3"/><path d="M7.8 1.8 L14 1 L8.5 6 Z" fill="#e3e3e3"/><path d="M10 3 Q15.5 6.5 13.5 11.5 Q12.5 14 9 15.5" stroke="#e3e3e3" stroke-width="1.9" fill="none"/></svg>
<svg class="a" style="left:1607px;top:118px;" width="15" height="15" viewBox="0 0 15 15"><path d="M0.5 0.5 L14 7.5 L0.5 14.5 Z" fill="#e3e3e3"/></svg>
<svg class="a" style="left:1603px;top:159px;" width="20" height="14" viewBox="0 0 20 14"><path d="M10 0.5 Q19.5 0.5 19.5 6 Q19.5 9 16 8.5 Q13.5 8 13.5 10.5 Q13.5 13.5 10 13.5 Q0.5 13.5 0.5 7 Q0.5 0.5 10 0.5 Z" fill="#e3e3e3"/><circle cx="4.5" cy="8" r="1.3" fill="#535353"/><circle cx="6" cy="4" r="1.3" fill="#535353"/><circle cx="10.5" cy="3" r="1.3" fill="#535353"/><circle cx="15" cy="4.5" r="1.3" fill="#535353"/><circle cx="8.5" cy="10.5" r="1.3" fill="#535353"/></svg>
<svg class="a" style="left:1604px;top:186px;" width="17" height="14" viewBox="0 0 17 14"><rect x="0" y="0" width="17" height="14" fill="#e3e3e3"/><rect x="1.0" y="1.0" width="4.3" height="3.3" fill="#9a9a9a"/><rect x="6.3" y="1.0" width="4.3" height="3.3" fill="#9a9a9a"/><rect x="11.6" y="1.0" width="4.3" height="3.3" fill="#9a9a9a"/><rect x="1.0" y="5.3" width="4.3" height="3.3" fill="#555"/><rect x="6.3" y="5.3" width="4.3" height="3.3" fill="#555"/><rect x="11.6" y="5.3" width="4.3" height="3.3" fill="#555"/><rect x="1.0" y="9.6" width="4.3" height="3.3" fill="#444"/><rect x="6.3" y="9.6" width="4.3" height="3.3" fill="#444"/><rect x="11.6" y="9.6" width="4.3" height="3.3" fill="#444"/></svg>
<svg class="a" style="left:1602px;top:224px;" width="22" height="19" viewBox="0 0 22 19"><rect x="0" y="0" width="2" height="2" fill="#e3e3e3"/><rect x="3.5" y="0.3" width="5" height="1.4" fill="#e3e3e3"/><rect x="0" y="3.5" width="2" height="2" fill="#e3e3e3"/><rect x="3.5" y="3.8" width="5" height="1.4" fill="#e3e3e3"/><rect x="0" y="7" width="2" height="2" fill="#e3e3e3"/><rect x="3.5" y="7.3" width="5" height="1.4" fill="#e3e3e3"/><path d="M20.5 2 L12 11" stroke="#e3e3e3" stroke-width="2.6" stroke-linecap="round"/><path d="M10.5 10 Q6 11.5 5 18 Q10.5 17.5 13 12.5 Z" fill="#e3e3e3"/></svg>
<svg class="a" style="left:1602px;top:254px;" width="21" height="17" viewBox="0 0 21 17"><ellipse cx="5" cy="3" rx="4.5" ry="2.5" fill="#e3e3e3"/><rect x="8" y="2" width="12" height="2" fill="#e3e3e3"/><rect x="1" y="11" width="12" height="2" fill="#e3e3e3"/><path d="M20 7 Q14 9 13 12 Q14 15.5 20 16.5 Z" fill="#e3e3e3"/></svg>
<svg class="a" style="left:1602px;top:295px;" width="20" height="16" viewBox="0 0 20 16"><rect x="0" y="0" width="2" height="2" fill="#e3e3e3"/><rect x="3.5" y="0.3" width="4" height="1.4" fill="#e3e3e3"/><rect x="0" y="3.5" width="2" height="2" fill="#e3e3e3"/><rect x="3.5" y="3.8" width="4" height="1.4" fill="#e3e3e3"/><rect x="0" y="7" width="2" height="2" fill="#e3e3e3"/><circle cx="13" cy="3.5" r="3.2" fill="#e3e3e3"/><rect x="11.5" y="5.5" width="3" height="3" fill="#e3e3e3"/><rect x="6.5" y="8" width="13" height="4" rx="0.5" fill="#e3e3e3"/><rect x="6.5" y="13.5" width="13" height="1.5" fill="#e3e3e3"/></svg>
<div class="a t" style="transform:scaleX(1.058);left:1606px;top:336.5px;font-size:17px;line-height:17px;color:#e3e3e3;font-weight:normal;">A</div>
<div class="a" style="left:1619px;top:337px;width:1.2px;height:16px;background:#e3e3e3;"></div>
<svg class="a" style="left:1607px;top:364px;" width="12" height="16" viewBox="0 0 12 16"><path d="M5 1 Q0 1 0 5 Q0 9 5 9 Z" fill="#e3e3e3"/><rect x="4.5" y="0.5" width="2" height="15" fill="#e3e3e3"/><rect x="8.5" y="0.5" width="2" height="15" fill="#e3e3e3"/><rect x="4.5" y="0.5" width="6" height="1.8" fill="#e3e3e3"/></svg>
<svg class="a" style="left:1603px;top:405px;" width="19" height="18" viewBox="0 0 19 18"><path d="M3 15.5 L9 9.5" stroke="#e3e3e3" stroke-width="3.2" stroke-linecap="round"/><path d="M9 9.5 L17 1.5" stroke="#e3e3e3" stroke-width="1.4"/><path d="M1 3 Q1.5 0 4.5 1 L3 3 L4.5 4.5 L6.5 3 Q7.5 6 5 6.5 L13 14" stroke="#e3e3e3" stroke-width="1.7" fill="none"/><circle cx="15.5" cy="14.5" r="2.2" stroke="#e3e3e3" stroke-width="1.3" fill="none"/></svg>
<svg class="a" style="left:1603px;top:445px;" width="18" height="18" viewBox="0 0 18 18"><rect x="3.6" y="0.6" width="13.8" height="13.8" stroke="#e3e3e3" stroke-width="1.2" fill="none"/><rect x="0.6" y="3.6" width="13.8" height="13.8" stroke="#e3e3e3" stroke-width="1.2" fill="#535353"/><path d="M9 3.5 H13 V9 L11 7.5 L9 9 Z" fill="#e3e3e3"/></svg>
<div class="a t" style="transform:scaleX(0.650);left:1643px;top:80.8px;font-size:12px;line-height:12px;color:#e6e6e6;font-weight:normal;">プロパティ</div>
<svg class="a" style="left:1904px;top:83px;" width="11" height="9" viewBox="0 0 11 9"><rect x="0" y="0.00" width="10.5" height="1.1" fill="#d8d8d8"/><rect x="0" y="2.33" width="10.5" height="1.1" fill="#d8d8d8"/><rect x="0" y="4.66" width="10.5" height="1.1" fill="#d8d8d8"/><rect x="0" y="6.99" width="10.5" height="1.1" fill="#d8d8d8"/></svg>
<div class="a" style="left:1644px;top:107px;width:24px;height:23px;background:#3a3a3a;border-radius:3px"></div>
<svg class="a" style="left:1650px;top:111px;" width="12" height="15" viewBox="0 0 12 15"><path d="M0.75 0.75 H7.5 L11.25 4.5 V14.25 H0.75 Z M7.5 0.75 V4.5 H11.25" stroke="#e3e3e3" stroke-width="1.3" fill="none"/></svg>
<div class="a t" style="transform:scaleX(0.708);left:1674px;top:112.8px;font-size:12px;line-height:12px;color:#d8d8d8;font-weight:normal;">ドキュメント</div>
<div class="a" style="left:1634px;top:135px;width:270px;height:1px;background:#424242;"></div>
<div class="a" style="left:1903px;top:136px;width:16px;height:392px;background:#4a4a4a;"></div>
<div class="a" style="left:1905px;top:154px;width:12px;height:298px;background:#6b6b6b;"></div>
<svg class="a" style="left:1907px;top:144px;" width="9" height="6" viewBox="0 0 9 6"><polyline points="0.5,5 4.5,1 8.5,5" stroke="#a0a0a0" stroke-width="1.1" fill="none"/></svg>
<svg class="a" style="left:1907px;top:513px;" width="9" height="6" viewBox="0 0 9 6"><polyline points="0.5,1 4.5,5 8.5,1" stroke="#a0a0a0" stroke-width="1.1" fill="none"/></svg>
<svg class="a" style="left:1640.5px;top:146.25px;" width="10" height="6.5" viewBox="0 0 10 6.5"><polyline points="1,1 5.0,5.5 9,1" fill="none" stroke="#c8c8c8" stroke-width="1.2"/></svg>
<div class="a t" style="transform:scaleX(0.854);left:1656px;top:144.5px;font-size:12px;line-height:12px;color:#f2f2f2;font-weight:bold;">カンバス</div>
<div class="a t" style="transform:scaleX(0.962);left:1685px;top:173.1px;font-size:11px;line-height:11px;color:#d8d8d8;font-weight:normal;">W</div>
<div class="a" style="left:1703px;top:167px;width:55px;height:21px;background:#464646;border:1px solid #5c5c5c;border-radius:2px"></div>
<div class="a t" style="transform:scaleX(0.970);left:1706px;top:173.1px;font-size:11px;line-height:11px;color:#f0f0f0;font-weight:normal;">1000 px</div>
<div class="a t" style="transform:scaleX(1.089);left:1771px;top:173.1px;font-size:11px;line-height:11px;color:#d8d8d8;font-weight:normal;">X</div>
<div class="a" style="left:1787px;top:167px;width:56px;height:21px;background:#4e4e4e;border:1px solid #585858;border-radius:2px"></div>
<div class="a t" style="transform:scaleX(1.010);left:1790px;top:173.1px;font-size:11px;line-height:11px;color:#7a7a7a;font-weight:normal;">0 px</div>
<div class="a t" style="transform:scaleX(0.880);left:1688px;top:202.1px;font-size:11px;line-height:11px;color:#d8d8d8;font-weight:normal;">H</div>
<div class="a" style="left:1703px;top:196px;width:55px;height:21px;background:#464646;border:1px solid #5c5c5c;border-radius:2px"></div>
<div class="a t" style="transform:scaleX(0.939);left:1706px;top:202.1px;font-size:11px;line-height:11px;color:#f0f0f0;font-weight:normal;">600 px</div>
<div class="a t" style="transform:scaleX(1.089);left:1771px;top:202.1px;font-size:11px;line-height:11px;color:#d8d8d8;font-weight:normal;">Y</div>
<div class="a" style="left:1787px;top:196px;width:56px;height:21px;background:#4e4e4e;border:1px solid #585858;border-radius:2px"></div>
<div class="a t" style="transform:scaleX(1.010);left:1790px;top:202.1px;font-size:11px;line-height:11px;color:#7a7a7a;font-weight:normal;">0 px</div>
<svg class="a" style="left:1652px;top:185px;" width="10" height="15" viewBox="0 0 10 15"><rect x="1.5" y="0.75" width="6" height="7" rx="3" stroke="#cfcfcf" stroke-width="1.4" fill="none"/><rect x="1.5" y="6.5" width="6" height="7.5" rx="3" stroke="#cfcfcf" stroke-width="1.4" fill="none"/></svg>
<svg class="a" style="left:1706px;top:232px;" width="16" height="17" viewBox="0 0 16 17"><rect x="0.6" y="0.6" width="14.8" height="15.8" stroke="#d8d8d8" stroke-width="1.2" fill="none"/><circle cx="8" cy="5.8" r="2.4" fill="#d8d8d8"/><path d="M3.5 15.5 V11 Q3.5 8.8 8 8.8 Q12.5 8.8 12.5 11 V15.5 Z" fill="#d8d8d8"/></svg>
<div class="a" style="left:1728px;top:229px;width:25px;height:24px;background:#3a3a3a;border-radius:3px"></div>
<svg class="a" style="left:1732px;top:235px;" width="17" height="13" viewBox="0 0 17 13"><rect x="0.75" y="0.75" width="15.5" height="11.5" stroke="#e8e8e8" stroke-width="1.5" fill="none"/><circle cx="8.5" cy="4.5" r="2" fill="#e8e8e8"/><path d="M4.5 11.5 V9.5 Q4.5 7.5 8.5 7.5 Q12.5 7.5 12.5 9.5 V11.5 Z" fill="#e8e8e8"/></svg>
<div class="a t" style="transform:scaleX(0.985);left:1703px;top:264.8px;font-size:12px;line-height:12px;color:#d8d8d8;font-weight:normal;">解像度 : 72 pixel/inch</div>
<div class="a t" style="transform:scaleX(0.806);left:1667px;top:289.8px;font-size:12px;line-height:12px;color:#d0d0d0;font-weight:normal;">モード</div>
<div class="a" style="left:1705px;top:287px;width:139px;height:23px;background:#464646;border:1px solid #5f5f5f;border-radius:3px"></div>
<div class="a t" style="transform:scaleX(0.780);left:1713px;top:292.8px;font-size:12px;line-height:12px;color:#f0f0f0;font-weight:normal;">RGB カラー</div>
<svg class="a" style="left:1831.5px;top:296.0px;" width="9" height="6" viewBox="0 0 9 6"><polyline points="1,1 4.5,5 8,1" fill="none" stroke="#c8c8c8" stroke-width="1.1"/></svg>
<div class="a" style="left:1705px;top:313px;width:139px;height:23px;background:#464646;border:1px solid #5f5f5f;border-radius:3px"></div>
<div class="a t" style="transform:scaleX(0.849);left:1713px;top:318.6px;font-size:12px;line-height:12px;color:#f0f0f0;font-weight:normal;">8 bit/チャンネル</div>
<svg class="a" style="left:1831.5px;top:322.0px;" width="9" height="6" viewBox="0 0 9 6"><polyline points="1,1 4.5,5 8,1" fill="none" stroke="#c8c8c8" stroke-width="1.1"/></svg>
<div class="a t" style="transform:scaleX(0.792);left:1677px;top:345.3px;font-size:12px;line-height:12px;color:#d0d0d0;font-weight:normal;">塗り</div>
<div class="a" style="left:1705px;top:343px;width:17px;height:18px;background:#1a1a1a;border:1px solid #5c5c5c"></div>
<div class="a" style="left:1727px;top:342px;width:117px;height:23px;background:#464646;border:1px solid #5f5f5f;border-radius:3px"></div>
<div class="a t" style="transform:scaleX(0.793);left:1735px;top:347.3px;font-size:12px;line-height:12px;color:#f0f0f0;font-weight:normal;">カスタム...</div>
<svg class="a" style="left:1831.5px;top:351.0px;" width="9" height="6" viewBox="0 0 9 6"><polyline points="1,1 4.5,5 8,1" fill="none" stroke="#c8c8c8" stroke-width="1.1"/></svg>
<div class="a" style="left:1634px;top:372px;width:269px;height:1px;background:#424242;"></div>
<svg class="a" style="left:1640.5px;top:383.25px;" width="10" height="6.5" viewBox="0 0 10 6.5"><polyline points="1,1 5.0,5.5 9,1" fill="none" stroke="#c8c8c8" stroke-width="1.2"/></svg>
<div class="a t" style="transform:scaleX(0.786);left:1656px;top:381.5px;font-size:12px;line-height:12px;color:#f2f2f2;font-weight:bold;">定規とグリッド</div>
<svg class="a" style="left:1648px;top:409px;" width="18" height="18" viewBox="0 0 18 18"><path d="M1.5 16.5 V1.5 H16.5" stroke="#dcdcdc" stroke-width="3" fill="none"/><rect x="4" y="1" width="1" height="1.6" fill="#535353"/><rect x="1" y="4" width="1.6" height="1" fill="#535353"/><rect x="7" y="1" width="1" height="1.6" fill="#535353"/><rect x="1" y="7" width="1.6" height="1" fill="#535353"/><rect x="10" y="1" width="1" height="1.6" fill="#535353"/><rect x="1" y="10" width="1.6" height="1" fill="#535353"/><rect x="13" y="1" width="1" height="1.6" fill="#535353"/><rect x="1" y="13" width="1.6" height="1" fill="#535353"/></svg>
<svg class="a" style="left:1682px;top:410px;" width="17" height="17" viewBox="0 0 17 17"><rect x="0.6" y="0.6" width="15.8" height="15.8" stroke="#dcdcdc" stroke-width="1.2" fill="none"/><path d="M5.9 0.6 V16.4 M11.1 0.6 V16.4 M0.6 5.9 H16.4 M0.6 11.1 H16.4" stroke="#dcdcdc" stroke-width="1.2"/></svg>
<svg class="a" style="left:1715px;top:410px;" width="17" height="17" viewBox="0 0 17 17"><rect x="0.6" y="0.6" width="15.8" height="15.8" stroke="#dcdcdc" stroke-width="1.2" fill="#707070"/><rect x="1.2" y="1.2" width="2.5" height="2.5" fill="#4a4a4a"/><rect x="6.2" y="1.2" width="2.5" height="2.5" fill="#4a4a4a"/><rect x="11.2" y="1.2" width="2.5" height="2.5" fill="#4a4a4a"/><rect x="3.7" y="3.7" width="2.5" height="2.5" fill="#4a4a4a"/><rect x="8.7" y="3.7" width="2.5" height="2.5" fill="#4a4a4a"/><rect x="13.7" y="3.7" width="2.5" height="2.5" fill="#4a4a4a"/><rect x="1.2" y="6.2" width="2.5" height="2.5" fill="#4a4a4a"/><rect x="6.2" y="6.2" width="2.5" height="2.5" fill="#4a4a4a"/><rect x="11.2" y="6.2" width="2.5" height="2.5" fill="#4a4a4a"/><rect x="3.7" y="8.7" width="2.5" height="2.5" fill="#4a4a4a"/><rect x="8.7" y="8.7" width="2.5" height="2.5" fill="#4a4a4a"/><rect x="13.7" y="8.7" width="2.5" height="2.5" fill="#4a4a4a"/><rect x="1.2" y="11.2" width="2.5" height="2.5" fill="#4a4a4a"/><rect x="6.2" y="11.2" width="2.5" height="2.5" fill="#4a4a4a"/><rect x="11.2" y="11.2" width="2.5" height="2.5" fill="#4a4a4a"/><rect x="3.7" y="13.7" width="2.5" height="2.5" fill="#4a4a4a"/><rect x="8.7" y="13.7" width="2.5" height="2.5" fill="#4a4a4a"/><rect x="13.7" y="13.7" width="2.5" height="2.5" fill="#4a4a4a"/></svg>
<div class="a" style="left:1768px;top:407px;width:76px;height:23px;background:#464646;border:1px solid #5f5f5f;border-radius:3px"></div>
<div class="a t" style="transform:scaleX(0.972);left:1776px;top:411.3px;font-size:12px;line-height:12px;color:#f0f0f0;font-weight:normal;">pixel</div>
<svg class="a" style="left:1831.5px;top:416.0px;" width="9" height="6" viewBox="0 0 9 6"><polyline points="1,1 4.5,5 8,1" fill="none" stroke="#c8c8c8" stroke-width="1.1"/></svg>
<div class="a" style="left:1634px;top:441px;width:269px;height:1px;background:#424242;"></div>
<svg class="a" style="left:1640.5px;top:452.25px;" width="10" height="6.5" viewBox="0 0 10 6.5"><polyline points="1,1 5.0,5.5 9,1" fill="none" stroke="#c8c8c8" stroke-width="1.2"/></svg>
<div class="a t" style="transform:scaleX(0.833);left:1656px;top:450.5px;font-size:12px;line-height:12px;color:#f2f2f2;font-weight:bold;">ガイド</div>
<svg class="a" style="left:1648px;top:479px;" width="17" height="17" viewBox="0 0 17 17"><path d="M5 0 V17 M11 0 V17 M0 5 H17 M0 11 H17" stroke="#a8a8a8" stroke-width="1.2"/></svg>
<svg class="a" style="left:1682px;top:478px;" width="18" height="18" viewBox="0 0 18 18"><path d="M4 0 V17 M9 0 V17 M0 4 H13 M0 9 H13 M0 13 H8" stroke="#d8d8d8" stroke-width="1.2"/><rect x="10" y="11" width="7.5" height="6.5" fill="#d8d8d8"/><path d="M11.5 11 V9.5 Q13.75 7 16 9.5 V11" stroke="#d8d8d8" stroke-width="1.2" fill="none"/></svg>
<div class="a" style="left:1711px;top:474px;width:25px;height:25px;background:#3a3a3a;border-radius:3px"></div>
<svg class="a" style="left:1714px;top:478px;" width="20" height="18" viewBox="0 0 20 18"><path d="M3 0 V15 M0 3 H14" stroke="#e8e8e8" stroke-width="1.2"/><path d="M6 3 L9 0.5 M6 3 L9 5.5" stroke="#e8e8e8" stroke-width="1.1" fill="none"/><path d="M15 6 L10.5 12 H14 L12 17.5 L18 10.5 H14.5 L17 6 Z" fill="#e8e8e8"/></svg>
<div class="a" style="left:1768px;top:476px;width:76px;height:23px;background:#464646;border:1px solid #5f5f5f;border-radius:3px"></div>
<div class="a" style="left:1776px;top:486px;width:43px;height:3px;background:#dcdcdc;"></div>
<svg class="a" style="left:1831.5px;top:485.0px;" width="9" height="6" viewBox="0 0 9 6"><polyline points="1,1 4.5,5 8,1" fill="none" stroke="#c8c8c8" stroke-width="1.1"/></svg>
<div class="a" style="left:1634px;top:510px;width:269px;height:1px;background:#424242;"></div>
<svg class="a" style="left:1640.5px;top:519.75px;" width="10" height="6.5" viewBox="0 0 10 6.5"><polyline points="1,1 5.0,5.5 9,1" fill="none" stroke="#c8c8c8" stroke-width="1.2"/></svg>
<div class="a" style="left:1634px;top:515px;width:269px;height:12px;overflow:hidden"><div class="a t" style="left:22px;top:4px;font-size:12px;line-height:12px;color:#f2f2f2;font-weight:bold;transform:scaleX(0.8)">クイック操作</div></div>
<div class="a" style="left:1683px;top:555px;width:1px;height:28px;background:#3c3c3c;"></div>
<div class="a" style="left:1717px;top:555px;width:1px;height:28px;background:#3c3c3c;"></div>
<div class="a" style="left:1777px;top:555px;width:1px;height:28px;background:#3c3c3c;"></div>
<div class="a t" style="transform:scaleX(0.667);left:1643px;top:561.3px;font-size:12px;line-height:12px;color:#f2f2f2;font-weight:bold;">レイヤー</div>
<div class="a t" style="transform:scaleX(0.750);left:1692px;top:561.3px;font-size:12px;line-height:12px;color:#cfcfcf;font-weight:normal;">パス</div>
<div class="a t" style="transform:scaleX(0.700);left:1727px;top:561.3px;font-size:12px;line-height:12px;color:#cfcfcf;font-weight:normal;">チャンネル</div>
<svg class="a" style="left:1904px;top:564px;" width="11" height="9" viewBox="0 0 11 9"><rect x="0" y="0.00" width="10.5" height="1.1" fill="#d8d8d8"/><rect x="0" y="2.33" width="10.5" height="1.1" fill="#d8d8d8"/><rect x="0" y="4.66" width="10.5" height="1.1" fill="#d8d8d8"/><rect x="0" y="6.99" width="10.5" height="1.1" fill="#d8d8d8"/></svg>
<div class="a" style="left:1634px;top:583px;width:286px;height:32px;background:#535353;"></div>
<div class="a" style="left:1638px;top:591px;width:119px;height:22px;background:#4a4a4a;border:1px solid #5a5a5a;border-radius:3px"></div>
<svg class="a" style="left:1645px;top:596px;" width="12" height="12" viewBox="0 0 12 12"><circle cx="5" cy="5" r="3.8" stroke="#bcbcbc" stroke-width="1.5" fill="none"/><path d="M7.8 7.8 L11 11" stroke="#bcbcbc" stroke-width="1.8"/></svg>
<div class="a t" style="transform:scaleX(0.917);left:1661px;top:597.3px;font-size:12px;line-height:12px;color:#9a9a9a;font-weight:normal;">種類</div>
<svg class="a" style="left:1744.0px;top:601.5px;" width="9" height="6" viewBox="0 0 9 6"><polyline points="1,1 4.5,5 8,1" fill="none" stroke="#6e6e6e" stroke-width="1.1"/></svg>
<svg class="a" style="left:1777px;top:596px;" width="13" height="11" viewBox="0 0 13 11"><rect x="0.6" y="0.6" width="11.8" height="9.8" stroke="#c8c8c8" stroke-width="1.2" fill="none"/><path d="M2 9 L5 5 L7 7 L9 5 L11 9 Z" fill="#c8c8c8"/></svg>
<svg class="a" style="left:1801px;top:596px;" width="12" height="12" viewBox="0 0 12 12"><circle cx="6" cy="6" r="5.3" stroke="#c8c8c8" stroke-width="1.2" fill="none"/><path d="M9.7 2.3 L2.3 9.7 A5.3 5.3 0 0 0 9.7 2.3 Z" fill="#c8c8c8"/></svg>
<svg class="a" style="left:1826px;top:596px;" width="11" height="11" viewBox="0 0 11 11"><path d="M0.3 0.3 H10.7 V3.2 H9.8 L9.4 1.6 H6.3 V9.2 L7.6 9.5 V10.7 H3.4 V9.5 L4.7 9.2 V1.6 H1.6 L1.2 3.2 H0.3 Z" fill="#c8c8c8"/></svg>
<svg class="a" style="left:1850px;top:596px;" width="12" height="12" viewBox="0 0 12 12"><rect x="1.5" y="1.5" width="9" height="9" stroke="#c8c8c8" stroke-width="1.2" fill="none"/><rect x="0" y="0" width="3" height="3" fill="#c8c8c8"/><rect x="9" y="0" width="3" height="3" fill="#c8c8c8"/><rect x="0" y="9" width="3" height="3" fill="#c8c8c8"/><rect x="9" y="9" width="3" height="3" fill="#c8c8c8"/></svg>
<svg class="a" style="left:1874px;top:595px;" width="11" height="13" viewBox="0 0 11 13"><path d="M4 0.6 H8 L10.4 3 V9 H4 Z" stroke="#c8c8c8" stroke-width="1.2" fill="none"/><rect x="0" y="6" width="6" height="7" fill="#c8c8c8"/></svg>
<div class="a" style="left:1906px;top:593px;width:9px;height:17px;background:#4a4a4a;border-radius:5px;border:1px solid #5a5a5a"></div>
<svg class="a" style="left:1906px;top:593px;" width="9" height="9" viewBox="0 0 9 9"><circle cx="4.5" cy="4.5" r="4" fill="#bdbdbd"/></svg>
<div class="a" style="left:1634px;top:615px;width:286px;height:1px;background:#444;"></div>
<div class="a" style="left:1634px;top:616px;width:286px;height:29px;background:#535353;"></div>
<div class="a" style="left:1638px;top:620px;width:155px;height:22px;background:#4a4a4a;border:1px solid #585858;border-radius:3px"></div>
<div class="a t" style="transform:scaleX(0.917);left:1647px;top:626.3px;font-size:12px;line-height:12px;color:#8e8e8e;font-weight:normal;">通常</div>
<svg class="a" style="left:1781.0px;top:629.0px;" width="9" height="6" viewBox="0 0 9 6"><polyline points="1,1 4.5,5 8,1" fill="none" stroke="#6e6e6e" stroke-width="1.1"/></svg>
<div class="a t" style="transform:scaleX(0.988);left:1801px;top:624.3px;font-size:12px;line-height:12px;color:#8e8e8e;font-weight:normal;">不透明度 :</div>
<div class="a" style="left:1860px;top:620px;width:55px;height:22px;background:#4a4a4a;border:1px solid #585858;border-radius:3px"></div>
<div class="a" style="left:1864px;top:623px;width:35px;height:16px;background:#464646;"></div>
<div class="a" style="left:1899px;top:621px;width:1px;height:20px;background:#585858;"></div>
<div class="a t" style="transform:scaleX(0.995);left:1865px;top:624.8px;font-size:11px;line-height:11px;color:#7e7e7e;font-weight:normal;">100%</div>
<svg class="a" style="left:1902.5px;top:629.0px;" width="9" height="6" viewBox="0 0 9 6"><polyline points="1,1 4.5,5 8,1" fill="none" stroke="#6e6e6e" stroke-width="1.1"/></svg>
<div class="a" style="left:1634px;top:644px;width:286px;height:1px;background:#444;"></div>
<div class="a" style="left:1634px;top:645px;width:286px;height:30px;background:#535353;"></div>
<div class="a t" style="transform:scaleX(0.726);left:1641px;top:653.3px;font-size:12px;line-height:12px;color:#9a9a9a;font-weight:normal;">ロック :</div>
<svg class="a" style="left:1681px;top:653px;" width="12" height="12" viewBox="0 0 12 12"><rect x="0.5" y="0.5" width="11" height="11" stroke="#b0b0b0" stroke-width="1" fill="#777"/><rect x="1.0" y="1.0" width="2.5" height="2.5" fill="#3c3c3c"/><rect x="6.0" y="1.0" width="2.5" height="2.5" fill="#3c3c3c"/><rect x="3.5" y="3.5" width="2.5" height="2.5" fill="#3c3c3c"/><rect x="8.5" y="3.5" width="2.5" height="2.5" fill="#3c3c3c"/><rect x="1.0" y="6.0" width="2.5" height="2.5" fill="#3c3c3c"/><rect x="6.0" y="6.0" width="2.5" height="2.5" fill="#3c3c3c"/><rect x="3.5" y="8.5" width="2.5" height="2.5" fill="#3c3c3c"/><rect x="8.5" y="8.5" width="2.5" height="2.5" fill="#3c3c3c"/></svg>
<svg class="a" style="left:1703px;top:652px;" width="13" height="14" viewBox="0 0 13 14"><path d="M12.5 0.5 L6 7.5" stroke="#a8a8a8" stroke-width="2.2" stroke-linecap="round"/><path d="M5 7 Q1.5 8 0.5 13.5 Q4.5 13 6.5 9 Z" fill="#a8a8a8"/></svg>
<svg class="a" style="left:1724px;top:652px;" width="14" height="14" viewBox="0 0 14 14"><path d="M7 1 V13 M1 7 H13" stroke="#a8a8a8" stroke-width="1.3"/><path d="M7 0 L9.5 2.8 H4.5 Z M7 14 L9.5 11.2 H4.5 Z M0 7 L2.8 4.5 V9.5 Z M14 7 L11.2 4.5 V9.5 Z" fill="#a8a8a8"/></svg>
<svg class="a" style="left:1746px;top:652px;" width="15" height="15" viewBox="0 0 15 15"><path d="M3 0 V12 H15 M0 3 H12 V15" stroke="#a8a8a8" stroke-width="1.2" fill="none"/></svg>
<svg class="a" style="left:1769px;top:652px;" width="12" height="14" viewBox="0 0 12 14"><rect x="0.5" y="6" width="11" height="7.5" fill="#a8a8a8"/><path d="M2.8 6 V4 Q6 0 9.2 4 V6" stroke="#a8a8a8" stroke-width="1.6" fill="none"/><rect x="5" y="9" width="2" height="2" fill="#535353"/></svg>
<div class="a t" style="transform:scaleX(0.880);left:1828px;top:653.3px;font-size:12px;line-height:12px;color:#8e8e8e;font-weight:normal;">塗り :</div>
<div class="a" style="left:1860px;top:649px;width:55px;height:19px;background:#4a4a4a;border:1px solid #585858;border-radius:3px"></div>
<div class="a" style="left:1864px;top:651px;width:35px;height:15px;background:#464646;"></div>
<div class="a" style="left:1899px;top:650px;width:1px;height:17px;background:#585858;"></div>
<div class="a t" style="transform:scaleX(0.995);left:1865px;top:652.8px;font-size:11px;line-height:11px;color:#7e7e7e;font-weight:normal;">100%</div>
<svg class="a" style="left:1902.5px;top:657.0px;" width="9" height="6" viewBox="0 0 9 6"><polyline points="1,1 4.5,5 8,1" fill="none" stroke="#6e6e6e" stroke-width="1.1"/></svg>
<div class="a" style="left:1634px;top:675px;width:286px;height:25px;background:#535353;"></div>
<div class="a" style="left:1664px;top:676px;width:239px;height:24px;background:#6b6b6b;"></div>
<div class="a" style="left:1634px;top:700px;width:270px;height:1px;background:#474747;"></div>
<svg class="a" style="left:1642px;top:684px;" width="15" height="10" viewBox="0 0 15 10"><path d="M0.5 5 Q7.5 -2.5 14.5 5 Q7.5 12.5 0.5 5 Z" fill="#e8e8e8"/><circle cx="7.5" cy="5" r="2.6" fill="#535353"/><circle cx="7.5" cy="5" r="1.4" fill="#e8e8e8"/></svg>
<svg class="a" style="left:1665px;top:677px;" width="22" height="22" viewBox="0 0 22 22"><path d="M1 6 V1 H6 M16 1 H21 V6 M21 16 V21 H16 M6 21 H1 V16" stroke="#f0f0f0" stroke-width="1.4" fill="none"/><path d="M17 4 L8 14" stroke="#f0f0f0" stroke-width="2.4" stroke-linecap="round"/><path d="M7 13 Q4.5 14 4 18 Q7.5 17.5 9 15 Z" fill="#111" stroke="#f0f0f0" stroke-width="0.6"/></svg>
<div class="a t" style="transform:scaleX(0.917);left:1694px;top:683.3px;font-size:12px;line-height:12px;color:#f2f2f2;font-weight:normal;">背景</div>
<svg class="a" style="left:1876px;top:681px;" width="12" height="15" viewBox="0 0 12 15"><rect x="0.75" y="6.75" width="10.5" height="7.5" stroke="#e0e0e0" stroke-width="1.4" fill="none"/><path d="M3 6.5 V4 Q6 0.5 9 4 V6.5" stroke="#e0e0e0" stroke-width="1.4" fill="none"/><rect x="5" y="9.3" width="2" height="2" fill="#e0e0e0"/></svg>
<div class="a" style="left:1903px;top:675px;width:17px;height:332px;background:#4a4a4a;"></div>
<div class="a" style="left:1634px;top:1007px;width:286px;height:1px;background:#3e3e3e;"></div>
<div class="a" style="left:1634px;top:1008px;width:286px;height:24px;background:#535353;"></div>
<svg class="a" style="left:1716px;top:1015px;" width="15" height="13" viewBox="0 0 15 13"><rect x="0.8" y="2.3" width="7" height="5.4" rx="2.7" stroke="#a8a8a8" stroke-width="1.5" fill="none"/><rect x="7" y="2.3" width="7" height="5.4" rx="2.7" stroke="#a8a8a8" stroke-width="1.5" fill="none"/><path d="M4 5 H11" stroke="#a8a8a8" stroke-width="1.4"/></svg>
<div class="a t" style="transform:scaleX(1.010);left:1746px;top:1013.3px;font-size:14px;line-height:14px;color:#a8a8a8;font-weight:normal;font-family:"Liberation Serif",serif"><i>fx</i></div>
<svg class="a" style="left:1771px;top:1014px;" width="14" height="12" viewBox="0 0 14 12"><rect x="0" y="0" width="14" height="11" fill="#e0e0e0"/><circle cx="7" cy="5.5" r="3.2" fill="#535353"/></svg>
<svg class="a" style="left:1799px;top:1014px;" width="14" height="15" viewBox="0 0 14 15"><circle cx="6.5" cy="6.5" r="5.5" stroke="#e0e0e0" stroke-width="1.2" fill="none"/><path d="M10.4 2.6 L2.6 10.4 A5.5 5.5 0 0 0 10.4 2.6 Z" fill="#e0e0e0"/><path d="M10 12.5 L12 14.5 L14 12.5 Z" fill="#e0e0e0"/></svg>
<svg class="a" style="left:1826px;top:1015px;" width="14" height="12" viewBox="0 0 14 12"><path d="M0 0 H5.5 L6.5 1.5 H14 V11.5 H0 Z" fill="#e0e0e0"/><rect x="0" y="2.5" width="14" height="0.8" fill="#535353"/></svg>
<svg class="a" style="left:1853px;top:1014px;" width="13" height="13" viewBox="0 0 13 13"><rect x="0.7" y="0.7" width="11.6" height="11.6" stroke="#e0e0e0" stroke-width="1.4" fill="none"/><path d="M6.5 3 V10 M3 6.5 H10" stroke="#e0e0e0" stroke-width="1.5"/></svg>
<svg class="a" style="left:1880px;top:1013px;" width="13" height="15" viewBox="0 0 13 15"><rect x="0" y="2" width="13" height="1.3" fill="#a8a8a8"/><rect x="4.5" y="0" width="4" height="2" fill="none" stroke="#a8a8a8" stroke-width="1"/><path d="M1.5 4 H11.5 V14.5 H1.5 Z M4.5 5.5 V13 M6.5 5.5 V13 M8.5 5.5 V13" stroke="#a8a8a8" stroke-width="1" fill="none"/></svg>
<div class="a" style="left:145px;top:22px;width:302px;height:40px;border:3px solid #ff0000;border-radius:1px"></div>
<div class="a" style="left:477px;top:22px;width:96px;height:41px;border:3px solid #ff0000;border-radius:1px"></div>
<div class="a" style="left:787px;top:24px;width:52px;height:42px;border:3px solid #ff0000;border-radius:1px"></div>
<div class="a" style="left:4px;top:315px;width:41px;height:47px;border:3px solid #ff0000;border-radius:1px"></div>
<svg class="a" style="left:0px;top:0px;" width="1920" height="200" viewBox="0 0 1920 200"><path d="M356.5 60.5 L329 123" stroke="#ff0000" stroke-width="2.2"/><path d="M551.5 60 L578 121.5" stroke="#ff0000" stroke-width="2.2"/><path d="M839 57 L990 131" stroke="#ff0000" stroke-width="2.5"/></svg>
<div class="a" style="left:82px;top:123px;width:284px;height:62px;background:#000;border:3px solid #ff0000;border-radius:1px"></div>
<div class="a t" style="transform:scaleX(0.986);left:104px;top:137.5px;font-size:34px;line-height:34px;color:#ff0000;font-weight:bold;">好きな文字で</div>
<div class="a t" style="transform:scaleX(0.751);left:309px;top:133.5px;font-size:41px;line-height:41px;color:#ff0000;font-weight:normal;-webkit-text-stroke:0.9px #f00">OK</div>
<div class="a" style="left:460px;top:121px;width:243px;height:67px;background:#000;border:3px solid #ff0000;border-radius:1px"></div>
<div class="a t" style="transform:scaleX(0.933);left:477px;top:136.5px;font-size:34px;line-height:34px;color:#ff0000;font-weight:bold;">サイズ</div>
<div class="a t" style="transform:scaleX(0.869);left:575px;top:133.0px;font-size:41px;line-height:41px;color:#ff0000;font-weight:normal;-webkit-text-stroke:0.9px #f00">:200 pt</div>
<div class="a" style="left:989px;top:112px;width:544px;height:408px;border:3px solid #ff0000;border-radius:1px"></div>
<div class="a" style="left:992px;top:115px;width:538px;height:402px;background:#535353;border-radius:8px 8px 6px 6px"></div>
<div class="a" style="left:992px;top:115px;width:538px;height:29px;background:#ffffff;border-radius:8px 8px 0 0"></div>
<div class="a t" style="transform:scaleX(0.725);left:1000px;top:121.8px;font-size:12px;line-height:12px;color:#000000;font-weight:normal;">カラーピッカー (テキストカラー)</div>
<svg class="a" style="left:1509px;top:122px;" width="12" height="12" viewBox="0 0 12 12"><path d="M1 1 L11 11 M11 1 L1 11" stroke="#111" stroke-width="1.1"/></svg>
<div class="a" style="left:1002px;top:175px;width:256px;height:256px;background:linear-gradient(to bottom, rgba(0,0,0,0), #000), linear-gradient(to right, #fff, #ffa800)"></div>
<svg class="a" style="left:1250px;top:175px;overflow:hidden" width="8" height="8" viewBox="0 0 8 8"><circle cx="6" cy="1" r="5" stroke="#000" stroke-width="1.1" fill="none"/></svg>
<div class="a" style="left:1270px;top:175px;width:19px;height:256px;background:linear-gradient(to bottom, #f00 0%, #f0f 16.67%, #00f 33.33%, #0ff 50%, #0f0 66.67%, #ff0 83.33%, #f00 100%)"></div>
<svg class="a" style="left:1260px;top:397px;" width="8" height="11" viewBox="0 0 8 11"><path d="M1 1 L7 5.5 L1 10 Z" fill="#e8e8e8" stroke="#777" stroke-width="0.6"/></svg>
<svg class="a" style="left:1291px;top:397px;" width="8" height="11" viewBox="0 0 8 11"><path d="M7 1 L1 5.5 L7 10 Z" fill="#e8e8e8" stroke="#777" stroke-width="0.6"/></svg>
<div class="a t" style="transform:scaleX(0.979);left:1306px;top:175.8px;font-size:12px;line-height:12px;color:#e6e6e6;font-weight:normal;">新しい色</div>
<div class="a" style="left:1301px;top:191px;width:61px;height:69px;background:#2c2c2c;"></div>
<div class="a" style="left:1302px;top:192px;width:59px;height:33px;background:#ffa800;"></div>
<div class="a" style="left:1302px;top:225px;width:59px;height:34px;background:#fff8c6;"></div>
<div class="a t" style="transform:scaleX(1.042);left:1306px;top:261.8px;font-size:12px;line-height:12px;color:#e6e6e6;font-weight:normal;">現在の色</div>
<svg class="a" style="left:1370px;top:230px;" width="13" height="14" viewBox="0 0 13 14"><path d="M6.5 1 L12 4 V10 L6.5 13 L1 10 V4 Z" fill="#8a8a8a" stroke="#c8c8c8" stroke-width="1"/><path d="M1 4 L6.5 7 L12 4 M6.5 7 V13" stroke="#c8c8c8" stroke-width="1" fill="none"/></svg>
<div class="a" style="left:1370px;top:245px;width:14px;height:14px;background:#ffa800;border:1px solid #f0f0f0;box-shadow:0 0 0 1px #333"></div>
<div class="a" style="left:1404px;top:154px;width:115px;height:26px;border:2px solid #c8c8c8;border-radius:13px"></div>
<div class="a t" style="transform:scaleX(0.865);left:1454px;top:160.3px;font-size:12px;line-height:12px;color:#f0f0f0;font-weight:normal;">OK</div>
<div class="a" style="left:1404px;top:188px;width:115px;height:26px;border:1px solid #6e6e6e;border-radius:13px"></div>
<div class="a t" style="transform:scaleX(0.833);left:1435px;top:194.3px;font-size:12px;line-height:12px;color:#f0f0f0;font-weight:normal;">キャンセル</div>
<div class="a" style="left:1404px;top:229px;width:115px;height:26px;border:1px solid #6e6e6e;border-radius:13px"></div>
<div class="a t" style="transform:scaleX(0.891);left:1418.5px;top:235.3px;font-size:12px;line-height:12px;color:#f0f0f0;font-weight:normal;">スウォッチに追加</div>
<div class="a" style="left:1404px;top:272px;width:115px;height:25px;border:1px solid #6e6e6e;border-radius:13px"></div>
<div class="a t" style="transform:scaleX(0.776);left:1424.5px;top:277.8px;font-size:12px;line-height:12px;color:#f0f0f0;font-weight:normal;">カラーライブラリ</div>
<svg class="a" style="left:1301.5px;top:316.7px;" width="14" height="14" viewBox="0 0 14 14"><circle cx="7" cy="7" r="6.5" fill="#e4e4e4"/><circle cx="7" cy="7" r="2.6" fill="#2a2a2a"/></svg>
<div class="a t" style="transform:scaleX(1.043);left:1321px;top:317.0px;font-size:12px;line-height:12px;color:#e6e6e6;font-weight:normal;">H :</div>
<div class="a" style="left:1350px;top:313.2px;width:35px;height:21.5px;background:#464646;border:1px solid #6a6a6a"></div>
<div class="a t" style="transform:scaleX(1.160);left:1353.5px;top:317.6px;font-size:12px;line-height:12px;color:#f2f2f2;font-weight:normal;">40</div>
<div class="a t" style="transform:scaleX(1.143);left:1392px;top:318.0px;font-size:12px;line-height:12px;color:#e6e6e6;font-weight:normal;">°</div>
<svg class="a" style="left:1301.5px;top:343.9px;" width="14" height="14" viewBox="0 0 14 14"><circle cx="7" cy="7" r="6" fill="#4e4e4e" stroke="#7c7c7c" stroke-width="1"/></svg>
<div class="a t" style="transform:scaleX(1.091);left:1321px;top:344.2px;font-size:12px;line-height:12px;color:#e6e6e6;font-weight:normal;">S :</div>
<div class="a" style="left:1350px;top:340.4px;width:35px;height:21.5px;background:#464646;border:1px solid #6a6a6a"></div>
<div class="a t" style="transform:scaleX(1.048);left:1353.5px;top:344.8px;font-size:12px;line-height:12px;color:#f2f2f2;font-weight:normal;">100</div>
<div class="a t" style="transform:scaleX(1.078);left:1390px;top:344.7px;font-size:12px;line-height:12px;color:#e6e6e6;font-weight:normal;">%</div>
<svg class="a" style="left:1301.5px;top:371px;" width="14" height="14" viewBox="0 0 14 14"><circle cx="7" cy="7" r="6" fill="#4e4e4e" stroke="#7c7c7c" stroke-width="1"/></svg>
<div class="a t" style="transform:scaleX(1.091);left:1321px;top:371.3px;font-size:12px;line-height:12px;color:#e6e6e6;font-weight:normal;">B :</div>
<div class="a" style="left:1350px;top:367.5px;width:35px;height:21.5px;background:#464646;border:1px solid #6a6a6a"></div>
<div class="a t" style="transform:scaleX(1.048);left:1353.5px;top:371.9px;font-size:12px;line-height:12px;color:#f2f2f2;font-weight:normal;">100</div>
<div class="a t" style="transform:scaleX(1.078);left:1390px;top:371.8px;font-size:12px;line-height:12px;color:#e6e6e6;font-weight:normal;">%</div>
<svg class="a" style="left:1301.5px;top:402px;" width="14" height="14" viewBox="0 0 14 14"><circle cx="7" cy="7" r="6" fill="#4e4e4e" stroke="#7c7c7c" stroke-width="1"/></svg>
<div class="a t" style="transform:scaleX(1.043);left:1321px;top:402.3px;font-size:12px;line-height:12px;color:#e6e6e6;font-weight:normal;">R :</div>
<div class="a" style="left:1350px;top:398.5px;width:35px;height:21.5px;background:#464646;border:1px solid #6a6a6a"></div>
<div class="a t" style="transform:scaleX(1.073);left:1353.5px;top:402.9px;font-size:12px;line-height:12px;color:#f2f2f2;font-weight:normal;">255</div>
<svg class="a" style="left:1301.5px;top:429px;" width="14" height="14" viewBox="0 0 14 14"><circle cx="7" cy="7" r="6" fill="#4e4e4e" stroke="#7c7c7c" stroke-width="1"/></svg>
<div class="a t" style="transform:scaleX(0.999);left:1321px;top:429.3px;font-size:12px;line-height:12px;color:#e6e6e6;font-weight:normal;">G :</div>
<div class="a" style="left:1350px;top:425.5px;width:35px;height:21.5px;background:#464646;border:1px solid #6a6a6a"></div>
<div class="a t" style="transform:scaleX(1.073);left:1353.5px;top:429.9px;font-size:12px;line-height:12px;color:#f2f2f2;font-weight:normal;">168</div>
<svg class="a" style="left:1301.5px;top:456px;" width="14" height="14" viewBox="0 0 14 14"><circle cx="7" cy="7" r="6" fill="#4e4e4e" stroke="#7c7c7c" stroke-width="1"/></svg>
<div class="a t" style="transform:scaleX(1.091);left:1321px;top:456.3px;font-size:12px;line-height:12px;color:#e6e6e6;font-weight:normal;">B :</div>
<div class="a" style="left:1350px;top:452.5px;width:35px;height:21.5px;background:#464646;border:1px solid #6a6a6a"></div>
<div class="a t" style="transform:scaleX(1.121);left:1353.5px;top:456.9px;font-size:12px;line-height:12px;color:#f2f2f2;font-weight:normal;">0</div>
<svg class="a" style="left:1414px;top:316.7px;" width="14" height="14" viewBox="0 0 14 14"><circle cx="7" cy="7" r="6" fill="#4e4e4e" stroke="#7c7c7c" stroke-width="1"/></svg>
<div class="a t" style="transform:scaleX(1.162);left:1434px;top:317.0px;font-size:12px;line-height:12px;color:#e6e6e6;font-weight:normal;">L :</div>
<div class="a" style="left:1463px;top:313.2px;width:43px;height:21.5px;background:#464646;border:1px solid #6a6a6a"></div>
<div class="a t" style="transform:scaleX(1.085);left:1466.5px;top:317.6px;font-size:12px;line-height:12px;color:#f2f2f2;font-weight:normal;">76</div>
<svg class="a" style="left:1414px;top:343.9px;" width="14" height="14" viewBox="0 0 14 14"><circle cx="7" cy="7" r="6" fill="#4e4e4e" stroke="#7c7c7c" stroke-width="1"/></svg>
<div class="a t" style="transform:scaleX(1.124);left:1434px;top:344.2px;font-size:12px;line-height:12px;color:#e6e6e6;font-weight:normal;">a :</div>
<div class="a" style="left:1463px;top:340.4px;width:43px;height:21.5px;background:#464646;border:1px solid #6a6a6a"></div>
<div class="a t" style="transform:scaleX(1.085);left:1466.5px;top:344.8px;font-size:12px;line-height:12px;color:#f2f2f2;font-weight:normal;">26</div>
<svg class="a" style="left:1414px;top:371px;" width="14" height="14" viewBox="0 0 14 14"><circle cx="7" cy="7" r="6" fill="#4e4e4e" stroke="#7c7c7c" stroke-width="1"/></svg>
<div class="a t" style="transform:scaleX(1.124);left:1434px;top:371.3px;font-size:12px;line-height:12px;color:#e6e6e6;font-weight:normal;">b :</div>
<div class="a" style="left:1463px;top:367.5px;width:43px;height:21.5px;background:#464646;border:1px solid #6a6a6a"></div>
<div class="a t" style="transform:scaleX(1.085);left:1466.5px;top:371.9px;font-size:12px;line-height:12px;color:#f2f2f2;font-weight:normal;">80</div>
<div class="a t" style="transform:scaleX(0.912);left:1441px;top:402.3px;font-size:12px;line-height:12px;color:#e6e6e6;font-weight:normal;">C :</div>
<div class="a" style="left:1463px;top:398.5px;width:35px;height:21.5px;background:#464646;border:1px solid #6a6a6a"></div>
<div class="a t" style="transform:scaleX(0.972);left:1466.5px;top:402.9px;font-size:12px;line-height:12px;color:#f2f2f2;font-weight:normal;">0</div>
<div class="a t" style="transform:scaleX(1.124);left:1505px;top:402.8px;font-size:12px;line-height:12px;color:#e6e6e6;font-weight:normal;">%</div>
<div class="a t" style="transform:scaleX(0.900);left:1440px;top:429.3px;font-size:12px;line-height:12px;color:#e6e6e6;font-weight:normal;">M :</div>
<div class="a" style="left:1463px;top:425.5px;width:35px;height:21.5px;background:#464646;border:1px solid #6a6a6a"></div>
<div class="a t" style="transform:scaleX(1.085);left:1466.5px;top:429.9px;font-size:12px;line-height:12px;color:#f2f2f2;font-weight:normal;">44</div>
<div class="a t" style="transform:scaleX(1.124);left:1505px;top:429.8px;font-size:12px;line-height:12px;color:#e6e6e6;font-weight:normal;">%</div>
<div class="a t" style="transform:scaleX(0.968);left:1441px;top:456.3px;font-size:12px;line-height:12px;color:#e6e6e6;font-weight:normal;">Y :</div>
<div class="a" style="left:1463px;top:452.5px;width:35px;height:21.5px;background:#464646;border:1px solid #6a6a6a"></div>
<div class="a t" style="transform:scaleX(1.011);left:1466.5px;top:456.9px;font-size:12px;line-height:12px;color:#f2f2f2;font-weight:normal;">91</div>
<div class="a t" style="transform:scaleX(1.124);left:1505px;top:456.8px;font-size:12px;line-height:12px;color:#e6e6e6;font-weight:normal;">%</div>
<div class="a t" style="transform:scaleX(0.954);left:1441px;top:483.3px;font-size:12px;line-height:12px;color:#e6e6e6;font-weight:normal;">K :</div>
<div class="a" style="left:1463px;top:479.5px;width:35px;height:21.5px;background:#464646;border:1px solid #6a6a6a"></div>
<div class="a t" style="transform:scaleX(0.972);left:1466.5px;top:483.9px;font-size:12px;line-height:12px;color:#f2f2f2;font-weight:normal;">0</div>
<div class="a t" style="transform:scaleX(1.124);left:1505px;top:483.8px;font-size:12px;line-height:12px;color:#e6e6e6;font-weight:normal;">%</div>
<div class="a t" style="transform:scaleX(1.121);left:1304.5px;top:486.8px;font-size:12px;line-height:12px;color:#d8d8d8;font-weight:normal;">#</div>
<div class="a" style="left:1319px;top:483px;width:80px;height:22px;background:#464646;border:1.5px solid #2f7fe0"></div>
<div class="a t" style="transform:scaleX(1.025);left:1323px;top:486.8px;font-size:12px;line-height:12px;color:#f2f2f2;font-weight:normal;">ffa800</div>
<div class="a" style="left:1358px;top:486px;width:1px;height:15px;background:#f0f0f0;"></div>
<div class="a" style="left:1002px;top:445px;width:13px;height:12px;background:#474747;border:1px solid #7a7a7a;border-radius:2px"></div>
<div class="a t" style="transform:scaleX(0.932);left:1021.5px;top:444.8px;font-size:12px;line-height:12px;color:#e6e6e6;font-weight:normal;">Web セーフカラーのみに制限</div>
</body></html>
